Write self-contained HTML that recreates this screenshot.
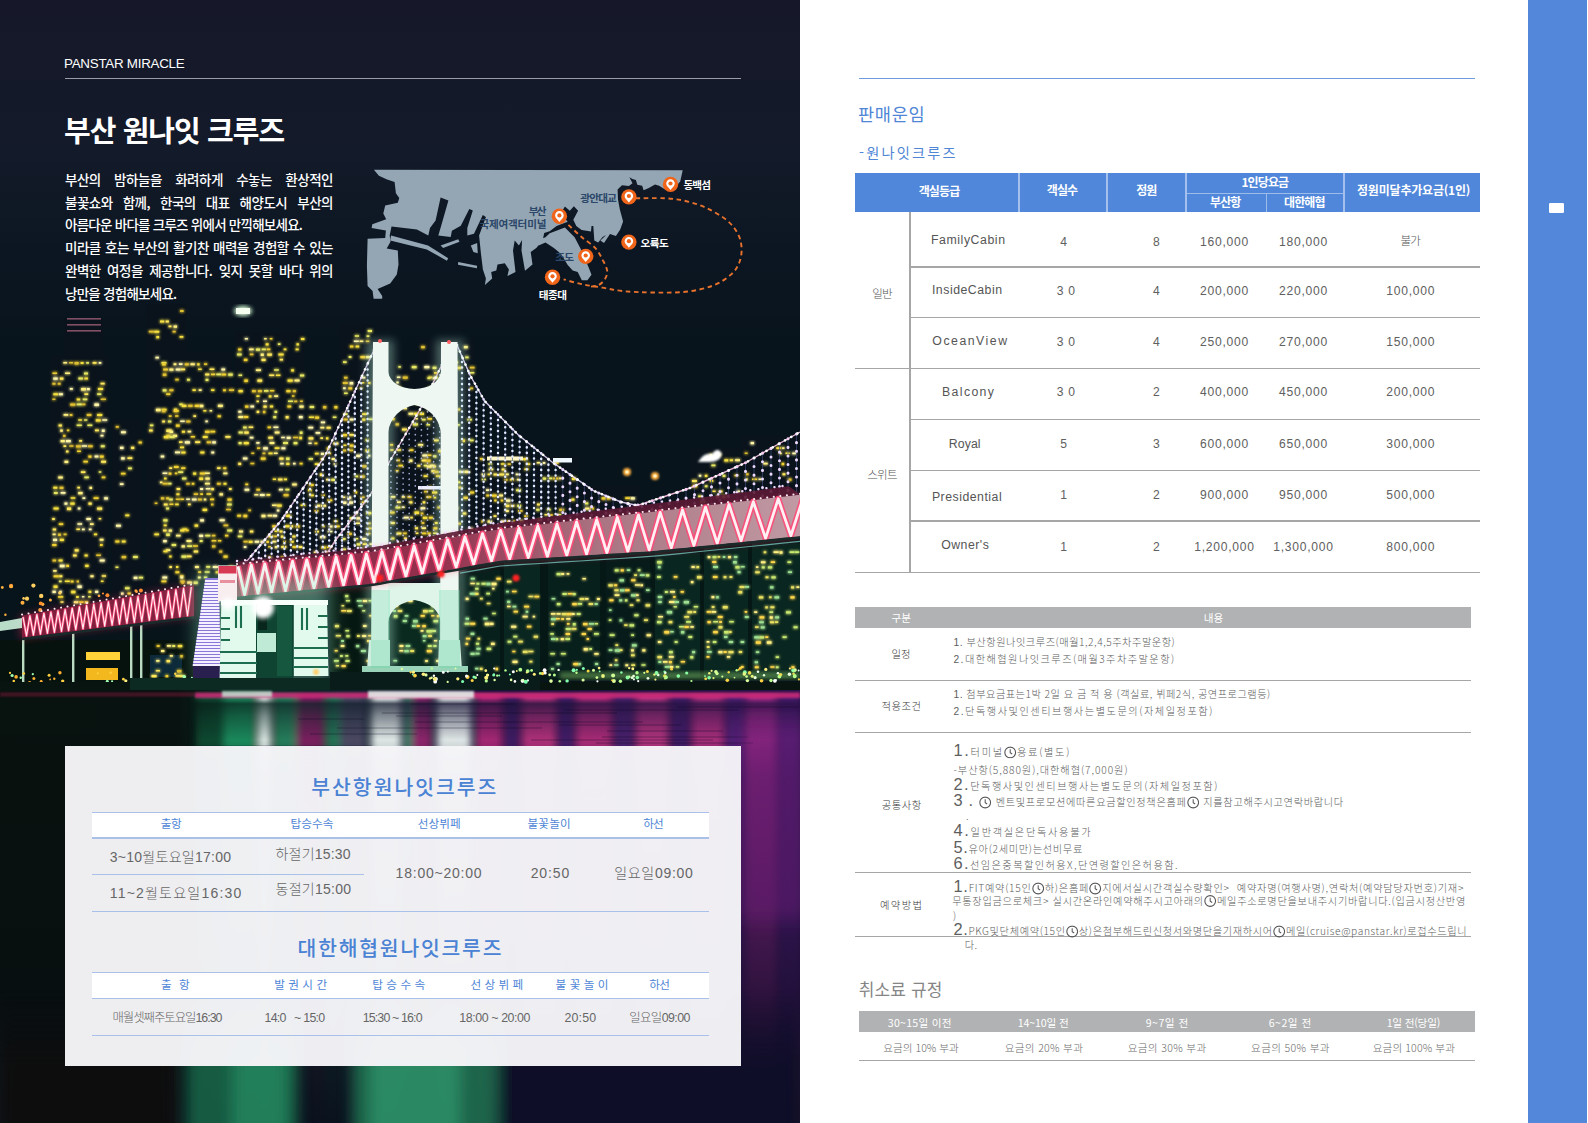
<!DOCTYPE html>
<html lang="ko">
<head>
<meta charset="utf-8">
<title>PANSTAR MIRACLE - 부산 원나잇 크루즈</title>
<style>
*{box-sizing:border-box;margin:0;padding:0}
html,body{width:1588px;height:1123px;overflow:hidden;background:#fff}
body{position:relative;font-family:"Liberation Sans","Noto Sans CJK KR",sans-serif;color:#555;-webkit-font-smoothing:antialiased}
.kr{font-family:"Noto Sans CJK KR","Liberation Sans",sans-serif}
.abs{position:absolute}
.t{position:absolute;white-space:nowrap;line-height:1}
.c{text-align:center}
#left{position:absolute;left:0;top:0;width:800px;height:1123px;overflow:hidden;background:#0b111c}
#left svg.photo{position:absolute;left:0;top:0}
#right{position:absolute;left:800px;top:0;width:788px;height:1123px;background:#fff}
#side{position:absolute;left:1528px;top:0;width:59px;height:1123px;background:#5387da}
.hl{position:absolute;height:1px}
.vl{position:absolute;width:1px}
</style>
</head>
<body>
<div id="left">
<!--PHOTO-->
<svg class="photo" width="800" height="1123" viewBox="0 0 800 1123">
<defs>
<linearGradient id="sky" x1="0" y1="0" x2="0" y2="1">
<stop offset="0" stop-color="#16182a"/><stop offset="0.22" stop-color="#131a29"/><stop offset="0.36" stop-color="#0c1622"/><stop offset="0.5" stop-color="#08141c"/><stop offset="1" stop-color="#07141a"/>
</linearGradient>
<linearGradient id="bandg" gradientUnits="userSpaceOnUse" x1="0" y1="0" x2="800" y2="0"><stop offset="0" stop-color="#7a1c3a"/><stop offset="0.55" stop-color="#94304e"/><stop offset="0.75" stop-color="#aa7482"/><stop offset="1" stop-color="#c09aa4"/></linearGradient>
<filter id="b1" x="-20%" y="-20%" width="140%" height="140%"><feGaussianBlur stdDeviation="1"/></filter>
<filter id="b2" x="-20%" y="-20%" width="140%" height="140%"><feGaussianBlur stdDeviation="2.2"/></filter>
<filter id="b4" x="-30%" y="-30%" width="160%" height="160%"><feGaussianBlur stdDeviation="4.5"/></filter>
<filter id="b8" x="-30%" y="-30%" width="160%" height="160%"><feGaussianBlur stdDeviation="9"/></filter>
<filter id="gl" x="-5%" y="-5%" width="110%" height="110%"><feGaussianBlur stdDeviation="1.6" result="b"/><feMerge><feMergeNode in="b"/><feMergeNode in="b"/><feMergeNode in="SourceGraphic"/></feMerge></filter>
<filter id="bw" x="-10%" y="-10%" width="120%" height="120%"><feGaussianBlur stdDeviation="3.6 1.5"/></filter>
<filter id="bw2" x="-10%" y="-10%" width="120%" height="120%"><feGaussianBlur stdDeviation="7 3"/></filter>
</defs>
<rect width="800" height="700" fill="url(#sky)"/>
<rect x="50" y="356" width="58" height="275.1775280898877" fill="#0a131c"/>
<rect x="64" y="318" width="39" height="313.8067415730337" fill="#0a131c"/>
<rect x="112" y="420" width="30" height="206.89887640449444" fill="#0a131c"/>
<rect x="146" y="304" width="40" height="317.361797752809" fill="#0a131c"/>
<rect x="160" y="352" width="72" height="251.51351351351354" fill="#0a131c"/>
<rect x="235" y="332" width="69" height="262.54814814814813" fill="#0a131c"/>
<rect x="306" y="400" width="32" height="191.27407407407406" fill="#0a131c"/>
<rect x="340" y="324" width="33" height="263.8203125" fill="#0a131c"/>
<rect x="388" y="360" width="53" height="215.6015625" fill="#0a131c"/>
<rect x="418" y="340" width="56" height="239.734375" fill="#0a131c"/>
<rect x="478" y="452" width="52" height="116.953125" fill="#0a131c"/>
<rect x="534" y="456" width="44" height="106.86092715231791" fill="#0a131c"/>
<rect x="582" y="486" width="58" height="73.84105960264901" fill="#0a131c"/>
<rect x="690" y="448" width="50" height="103.54765100671136" fill="#0a131c"/>
<rect x="742" y="436" width="58" height="110.27785234899329" fill="#0a131c"/>
<g filter="url(#gl)">
<path d="M63.3 362.0h3.8v1.5h-3.8zM65.0 372.4h5.1v1.6h-5.1zM81.1 388.0h4.8v2.4h-4.8zM63.6 414.0h4.6v1.7h-4.6zM60.2 429.6h2.6v2.1h-2.6zM60.6 440.0h4.2v2.3h-4.2zM64.5 460.8h3.7v2.2h-3.7zM58.2 476.4h4.6v2.2h-4.6zM89.5 486.8h2.5v2.3h-2.5zM78.2 492.0h4.4v2.3h-4.4zM90.0 523.2h3.6v1.9h-3.6zM52.6 533.6h3.1v1.7h-3.1zM99.7 538.8h3.8v1.9h-3.8zM53.2 570.0h3.4v1.7h-3.4zM90.4 575.2h3.2v2.1h-3.2zM73.8 601.2h4.5v2.1h-4.5z" fill="#fff080"/>
<path d="M69.1 362.0h3.9v1.6h-3.9zM74.5 362.0h4.2v2.4h-4.2zM52.4 382.8h3.1v1.9h-3.1zM57.8 382.8h2.8v2.0h-2.8zM52.4 398.4h3.0v1.7h-3.0zM100.7 398.4h5.2v1.5h-5.2zM70.2 403.6h5.1v2.1h-5.1zM82.2 403.6h3.2v1.7h-3.2zM69.8 414.0h2.6v2.1h-2.6zM86.8 414.0h4.6v2.0h-4.6zM63.1 434.8h2.4v2.2h-2.4zM69.3 445.2h4.2v1.6h-4.2zM76.0 445.2h4.9v2.2h-4.9zM88.0 445.2h4.7v2.1h-4.7zM59.6 486.8h3.8v2.2h-3.8zM58.1 533.6h2.8v2.3h-2.8zM63.5 533.6h3.1v1.7h-3.1zM96.2 554.4h4.7v1.6h-4.7zM52.6 559.6h3.5v1.8h-3.5zM76.6 580.4h2.4v2.1h-2.4z" fill="#e0c030"/>
<path d="M80.6 362.0h3.0v2.0h-3.0zM84.4 377.6h3.5v1.8h-3.5zM98.0 388.0h5.1v2.0h-5.1zM53.3 393.2h4.8v2.0h-4.8zM76.7 398.4h3.5v2.1h-3.5zM97.1 414.0h5.1v2.0h-5.1zM78.3 419.2h3.6v1.6h-3.6zM95.8 419.2h4.9v2.4h-4.9zM53.3 486.8h4.0v1.9h-4.0zM70.7 497.2h4.6v1.5h-4.6zM70.3 502.4h4.3v2.3h-4.3zM53.5 507.6h5.1v1.9h-5.1zM93.9 533.6h3.2v1.6h-3.2zM59.8 538.8h4.1v2.1h-4.1zM84.6 554.4h3.1v2.2h-3.1zM58.5 559.6h4.1v1.9h-4.1zM85.2 564.8h3.4v2.2h-3.4zM64.8 580.4h5.0v1.7h-5.0zM100.9 580.4h2.6v1.5h-2.6zM53.6 585.6h3.9v2.3h-3.9zM71.2 590.8h4.2v2.4h-4.2zM88.5 590.8h2.8v2.3h-2.8zM76.1 596.0h2.7v2.1h-2.7z" fill="#f6e040"/>
<path d="M86.2 362.0h2.7v1.8h-2.7zM84.0 372.4h4.0v2.2h-4.0zM78.4 377.6h4.5v1.9h-4.5zM97.2 393.2h4.1v1.8h-4.1zM82.7 398.4h4.6v1.8h-4.6zM76.7 403.6h5.2v1.7h-5.2zM84.1 419.2h3.2v1.6h-3.2zM76.7 424.4h5.1v1.6h-5.1zM87.4 424.4h4.9v1.7h-4.9zM100.8 445.2h3.9v2.0h-3.9zM98.8 471.2h2.5v1.6h-2.5zM84.3 476.4h4.5v1.9h-4.5zM53.9 492.0h3.8v2.1h-3.8zM58.9 580.4h2.8v1.8h-2.8zM88.1 596.0h2.6v1.5h-2.6z" fill="#e8e860"/>
<path d="M92.6 362.0h4.0v1.7h-4.0zM59.9 377.6h3.5v2.1h-3.5zM100.5 382.8h4.2v1.6h-4.2zM84.4 393.2h3.8v1.8h-3.8zM58.6 424.4h3.3v2.1h-3.3zM95.0 429.6h3.9v1.7h-3.9zM79.2 440.0h2.9v1.7h-2.9zM63.5 445.2h2.7v1.9h-2.7zM66.0 450.4h2.5v2.1h-2.5zM101.1 460.8h4.9v1.9h-4.9zM80.9 471.2h4.5v1.7h-4.5zM77.3 486.8h2.7v1.8h-2.7zM88.5 502.4h3.2v2.3h-3.2zM67.0 507.6h4.1v2.3h-4.1zM97.1 507.6h5.0v2.2h-5.0zM52.2 518.0h2.6v1.9h-2.6zM98.7 518.0h2.5v1.6h-2.5zM52.7 528.4h3.4v2.2h-3.4zM76.4 528.4h3.6v1.6h-3.6zM74.7 549.2h3.9v2.3h-3.9zM73.0 554.4h3.7v2.0h-3.7zM59.3 575.2h3.0v2.1h-3.0zM101.8 575.2h4.2v1.5h-4.2zM60.5 601.2h3.0v1.6h-3.0zM84.8 601.2h3.4v2.3h-3.4z" fill="#ffe85a"/>
<path d="M98.7 362.0h2.6v1.7h-2.6zM53.3 377.6h4.4v2.1h-4.4zM69.8 388.0h3.0v1.8h-3.0zM87.0 388.0h2.8v2.2h-2.8zM59.0 393.2h3.9v2.0h-3.9zM94.4 403.6h4.5v2.3h-4.5zM102.3 419.2h4.9v1.6h-4.9zM101.8 429.6h2.9v2.3h-2.9zM100.5 434.8h3.0v1.7h-3.0zM66.0 440.0h4.8v2.3h-4.8zM81.8 445.2h5.2v1.6h-5.2zM94.6 455.6h3.8v1.9h-3.8zM60.6 492.0h4.9v1.8h-4.9zM82.5 497.2h2.8v1.7h-2.8zM104.2 497.2h3.7v2.4h-3.7zM64.5 502.4h2.9v2.3h-2.9zM77.8 507.6h2.6v1.9h-2.6zM86.4 518.0h4.5v1.9h-4.5zM77.4 523.2h4.7v1.6h-4.7zM82.0 528.4h2.7v1.9h-2.7zM88.8 528.4h2.8v1.9h-2.8zM53.0 538.8h4.1v2.2h-4.1zM99.7 559.6h5.0v1.8h-5.0zM59.8 564.8h4.8v2.4h-4.8zM77.5 585.6h4.2v2.4h-4.2zM52.5 590.8h3.3v2.2h-3.3zM59.3 590.8h2.5v2.1h-2.5zM95.1 590.8h3.1v2.3h-3.1zM81.9 596.0h2.5v1.5h-2.5z" fill="#fff6a8"/>
<path d="M52.5 372.4h4.6v1.6h-4.6zM66.9 429.6h2.4v1.6h-2.4zM77.0 450.4h3.9v1.7h-3.9zM88.4 455.6h3.1v2.2h-3.1zM99.9 455.6h3.8v2.1h-3.8zM83.4 460.8h4.5v1.7h-4.5zM101.7 476.4h3.6v1.8h-3.6zM93.6 497.2h5.0v1.7h-5.0zM58.8 523.2h4.4v1.8h-4.4zM52.2 544.0h4.3v1.9h-4.3zM100.0 544.0h2.7v2.0h-2.7zM66.2 564.8h2.8v2.3h-2.8zM53.6 575.2h5.2v2.0h-5.2zM70.8 580.4h2.8v2.1h-2.8zM58.1 596.0h5.1v1.7h-5.1zM79.1 601.2h4.5v1.7h-4.5z" fill="#f0d030"/>
</g>
<g filter="url(#gl)">
<path d="M115.8 426.0h3.0v1.7h-3.0zM121.7 556.0h4.4v2.3h-4.4z" fill="#e0c030"/>
<path d="M121.0 431.2h4.8v2.1h-4.8zM120.0 446.8h3.5v2.2h-3.5zM121.1 457.2h3.6v2.2h-3.6zM119.9 483.2h3.6v1.9h-3.6zM116.0 524.8h4.9v2.0h-4.9zM133.7 576.8h3.7v2.3h-3.7zM121.0 592.4h2.6v2.3h-2.6z" fill="#fff6a8"/>
<path d="M138.6 441.6h3.2v1.8h-3.2zM120.9 472.8h4.6v1.8h-4.6zM115.3 540.4h4.1v2.1h-4.1z" fill="#f0d030"/>
<path d="M131.1 446.8h3.1v2.2h-3.1zM127.5 457.2h4.8v1.9h-4.8z" fill="#ffe85a"/>
<path d="M128.0 467.6h3.9v1.6h-3.9zM133.1 556.0h4.7v1.9h-4.7zM115.5 566.4h2.9v1.5h-2.9zM138.8 576.8h4.3v1.6h-4.3zM125.0 587.2h4.6v2.1h-4.6z" fill="#e8e860"/>
<path d="M125.3 514.4h4.0v1.8h-4.0zM121.8 540.4h3.8v2.2h-3.8zM127.5 592.4h3.3v2.2h-3.3z" fill="#f6e040"/>
</g>
<g filter="url(#gl)">
<path d="M180.1 310.0h3.5v2.0h-3.5zM148.8 330.8h5.1v1.7h-5.1zM172.6 330.8h3.1v1.8h-3.1zM166.3 434.8h4.1v2.4h-4.1zM160.9 497.2h3.3v2.3h-3.3zM166.1 497.2h2.9v2.2h-2.9zM154.7 502.4h2.7v1.7h-2.7zM180.3 580.4h4.4v1.9h-4.4z" fill="#e0c030"/>
<path d="M160.0 320.4h4.2v2.2h-4.2zM154.3 330.8h5.0v2.0h-5.0zM156.3 336.0h2.8v2.2h-2.8zM179.6 336.0h3.7v1.7h-3.7zM161.8 408.8h4.7v1.6h-4.7zM182.4 528.4h4.7v1.8h-4.7zM154.3 533.6h4.7v1.7h-4.7z" fill="#f6e040"/>
<path d="M165.7 320.4h3.2v2.0h-3.2zM168.5 325.6h3.0v1.7h-3.0zM174.0 408.8h3.1v2.2h-3.1zM149.1 429.6h3.6v2.0h-3.6zM166.3 429.6h5.1v2.4h-5.1z" fill="#ffe85a"/>
<path d="M173.6 325.6h3.4v2.1h-3.4zM155.9 408.8h4.8v2.4h-4.8zM173.0 434.8h4.1v2.3h-4.1zM159.9 481.6h2.6v1.7h-2.6zM165.9 549.2h4.4v1.8h-4.4z" fill="#fff080"/>
<path d="M155.5 356.8h3.4v1.8h-3.4zM160.7 455.6h3.5v1.9h-3.5z" fill="#fff6a8"/>
<path d="M161.4 362.0h5.1v1.6h-5.1zM179.3 403.6h3.4v1.7h-3.4zM149.9 424.4h3.4v1.9h-3.4zM178.2 471.2h5.0v1.8h-5.0zM166.1 507.6h3.0v1.9h-3.0zM166.2 533.6h3.6v2.3h-3.6zM171.7 544.0h4.4v2.1h-4.4z" fill="#e8e860"/>
<path d="M166.2 393.2h4.1v1.9h-4.1zM175.9 424.4h3.8v2.4h-3.8zM173.9 466.0h4.8v2.1h-4.8zM180.1 575.2h3.3v2.2h-3.3zM161.4 580.4h5.0v1.9h-5.0z" fill="#f0d030"/>
</g>
<g filter="url(#gl)">
<path d="M162.1 363.2h3.6v2.2h-3.6zM163.2 368.4h4.7v2.2h-4.7zM211.0 373.6h4.1v1.7h-4.1zM221.7 373.6h4.4v1.8h-4.4zM223.1 389.2h2.8v2.1h-2.8zM194.7 404.8h4.8v2.1h-4.8zM173.7 410.0h5.0v2.0h-5.0zM175.1 415.2h3.3v1.5h-3.3zM217.6 415.2h3.3v2.1h-3.3zM205.1 430.8h4.5v2.2h-4.5zM210.4 430.8h4.8v1.7h-4.8zM190.7 436.0h4.3v1.6h-4.3zM181.1 467.2h4.3v1.7h-4.3zM223.2 467.2h3.1v2.0h-3.1zM168.6 472.4h2.8v2.4h-2.8zM174.8 472.4h2.5v1.9h-2.5zM199.8 472.4h5.1v2.1h-5.1zM191.8 482.8h2.5v2.0h-2.5zM200.2 493.2h2.8v1.7h-2.8zM181.0 498.4h2.9v1.6h-2.9zM210.1 498.4h4.0v1.8h-4.0zM227.5 498.4h4.2v2.3h-4.2zM169.4 503.6h4.0v1.5h-4.0zM185.9 529.6h2.8v1.7h-2.8zM225.0 534.8h3.3v1.6h-3.3zM211.6 540.0h4.7v1.6h-4.7zM218.0 540.0h3.3v1.5h-3.3zM193.0 545.2h4.9v1.5h-4.9zM223.5 555.6h4.1v2.2h-4.1zM175.4 571.2h3.9v2.1h-3.9zM198.2 571.2h2.9v1.9h-2.9zM215.6 571.2h4.0v2.1h-4.0z" fill="#f0d030"/>
<path d="M173.6 363.2h2.8v2.1h-2.8zM190.5 363.2h4.3v2.0h-4.3zM169.4 368.4h4.0v2.4h-4.0zM198.7 389.2h2.9v1.8h-2.9zM200.0 404.8h3.3v2.4h-3.3zM217.9 404.8h4.9v2.1h-4.9zM209.6 410.0h2.5v1.5h-2.5zM169.6 430.8h3.5v2.3h-3.5zM187.6 430.8h3.6v1.8h-3.6zM205.0 472.4h4.8v1.6h-4.8zM223.3 472.4h4.1v1.9h-4.1zM205.4 477.6h4.3v2.1h-4.3zM204.9 482.8h5.0v1.8h-5.0zM219.5 493.2h3.4v2.2h-3.4zM203.8 498.4h2.5v2.0h-2.5zM168.7 529.6h3.2v2.1h-3.2zM176.1 534.8h4.5v1.7h-4.5zM186.5 540.0h5.1v2.1h-5.1zM181.6 545.2h3.3v2.2h-3.3zM195.0 566.0h3.9v1.9h-3.9zM197.9 576.4h2.8v2.2h-2.8zM187.2 581.6h4.7v2.2h-4.7z" fill="#fff080"/>
<path d="M178.9 363.2h3.6v1.7h-3.6zM175.7 368.4h4.8v2.0h-4.8zM221.4 368.4h3.7v2.0h-3.7zM180.2 420.4h4.5v1.7h-4.5zM205.4 420.4h2.4v1.9h-2.4zM184.8 441.2h5.1v2.3h-5.1zM212.3 441.2h3.5v2.4h-3.5zM175.0 451.6h5.1v1.7h-5.1zM211.3 451.6h2.9v1.8h-2.9zM162.6 472.4h4.7v1.6h-4.7zM200.1 488.0h3.0v2.1h-3.0zM205.7 488.0h4.7v1.6h-4.7zM186.2 498.4h3.7v1.7h-3.7zM191.9 498.4h4.7v2.2h-4.7zM200.2 519.2h3.7v2.2h-3.7zM219.6 519.2h5.1v2.0h-5.1zM199.2 534.8h3.9v2.1h-3.9zM163.2 540.0h3.5v2.2h-3.5zM212.8 566.0h5.1v2.0h-5.1zM162.4 576.4h4.8v2.1h-4.8zM180.4 576.4h2.7v2.2h-2.7z" fill="#fff6a8"/>
<path d="M184.7 363.2h4.1v2.3h-4.1zM204.0 363.2h3.2v1.9h-3.2zM162.8 373.6h3.6v2.3h-3.6zM175.3 378.8h3.4v1.8h-3.4zM169.3 389.2h4.1v2.1h-4.1zM228.9 389.2h5.2v1.8h-5.2zM188.1 404.8h4.5v2.2h-4.5zM162.1 410.0h3.3v2.2h-3.3zM168.8 415.2h2.8v1.7h-2.8zM186.2 420.4h4.2v2.1h-4.2zM206.7 441.2h4.3v2.1h-4.3zM162.6 482.8h5.2v1.7h-5.2zM186.2 482.8h3.5v1.9h-3.5zM216.9 482.8h3.9v1.9h-3.9zM193.8 493.2h4.2v1.7h-4.2zM175.7 498.4h5.0v1.5h-5.0zM198.0 498.4h3.9v2.2h-3.9zM211.0 503.6h2.5v1.9h-2.5zM226.1 508.8h4.9v1.5h-4.9zM223.5 524.4h4.7v1.9h-4.7zM211.9 534.8h3.5v1.8h-3.5zM212.0 545.2h3.4v2.3h-3.4zM219.3 550.4h2.9v2.3h-2.9zM228.9 566.0h4.2v2.2h-4.2zM181.4 581.6h2.7v2.2h-2.7z" fill="#e0c030"/>
<path d="M197.2 363.2h2.4v2.4h-2.4zM198.1 368.4h3.6v1.7h-3.6zM192.5 389.2h3.3v1.7h-3.3zM211.1 389.2h3.3v1.9h-3.3zM181.8 404.8h4.6v2.3h-4.6zM203.3 410.0h3.1v1.5h-3.1zM181.9 430.8h3.1v1.9h-3.1zM163.8 436.0h4.6v2.3h-4.6zM202.8 436.0h4.9v2.0h-4.9zM180.0 446.4h4.1v1.8h-4.1zM181.3 451.6h4.2v2.0h-4.2zM200.3 451.6h4.1v2.0h-4.1zM193.1 472.4h3.1v2.3h-3.1zM164.0 477.6h2.6v1.9h-2.6zM199.3 477.6h3.8v2.3h-3.8zM223.5 482.8h3.0v1.9h-3.0zM176.4 493.2h3.1v2.0h-3.1zM206.5 493.2h4.7v1.6h-4.7zM175.2 503.6h3.5v1.7h-3.5zM202.6 508.8h4.5v2.1h-4.5zM163.7 524.4h3.0v1.9h-3.0zM194.6 524.4h3.5v2.4h-3.5zM180.1 529.6h4.2v1.8h-4.2zM163.4 550.4h4.1v1.8h-4.1zM169.2 555.6h2.4v2.0h-2.4zM176.0 566.0h2.4v2.1h-2.4z" fill="#f6e040"/>
<path d="M180.8 368.4h4.3v1.9h-4.3zM209.6 368.4h4.8v1.7h-4.8zM205.2 373.6h4.1v1.9h-4.1zM193.4 415.2h2.6v1.9h-2.6zM162.2 420.4h2.8v2.2h-2.8zM225.3 436.0h5.2v1.8h-5.2zM179.1 441.2h3.4v1.9h-3.4zM195.1 441.2h5.1v1.7h-5.1zM169.3 467.2h2.8v1.7h-2.8zM217.1 467.2h3.4v1.8h-3.4zM176.6 488.0h3.6v2.1h-3.6zM211.2 488.0h2.7v2.2h-2.7zM229.0 488.0h2.6v2.1h-2.6zM163.8 503.6h3.8v2.0h-3.8zM188.0 503.6h2.7v1.6h-2.7zM163.1 529.6h3.5v1.9h-3.5zM193.7 550.4h4.4v2.2h-4.4zM186.8 555.6h4.8v1.7h-4.8zM169.4 566.0h2.5v2.0h-2.5z" fill="#ffe85a"/>
<path d="M216.3 373.6h4.9v1.6h-4.9zM228.2 373.6h4.5v2.1h-4.5zM187.0 378.8h2.9v1.9h-2.9zM205.6 378.8h2.8v2.3h-2.8zM162.7 389.2h3.8v2.3h-3.8zM167.9 420.4h3.4v2.1h-3.4zM169.6 436.0h5.0v2.1h-5.0zM182.1 477.6h4.3v2.0h-4.3zM168.2 482.8h3.3v1.7h-3.3zM169.1 498.4h3.7v2.2h-3.7zM227.1 503.6h4.6v2.0h-4.6zM163.3 519.2h4.2v2.3h-4.2zM227.2 529.6h5.0v1.9h-5.0zM205.2 534.8h5.1v1.6h-5.1zM199.7 540.0h2.9v2.0h-2.9zM187.2 545.2h4.9v1.9h-4.9zM181.5 555.6h4.8v2.2h-4.8zM206.2 566.0h4.0v1.7h-4.0zM204.7 571.2h4.9v1.5h-4.9zM203.9 576.4h3.3v1.8h-3.3zM193.7 581.6h4.0v2.3h-4.0z" fill="#e8e860"/>
</g>
<g filter="url(#gl)">
<path d="M244.8 338.0h3.1v1.5h-3.1zM263.0 400.4h4.0v1.7h-4.0zM250.4 405.6h3.7v1.8h-3.7zM238.3 410.8h3.3v1.9h-3.3zM298.9 416.0h3.8v2.2h-3.8zM273.4 426.4h5.0v1.5h-5.0zM249.7 436.8h3.7v1.8h-3.7zM281.2 436.8h3.6v1.5h-3.6zM286.7 436.8h3.9v2.3h-3.9zM256.3 442.0h3.2v1.8h-3.2zM263.2 447.2h4.6v2.2h-4.6zM281.4 447.2h4.0v2.1h-4.0zM242.9 457.6h4.5v1.8h-4.5zM280.2 462.8h3.5v1.8h-3.5zM293.0 462.8h2.6v1.7h-2.6zM244.6 488.8h4.6v1.9h-4.6zM278.9 488.8h4.0v1.8h-4.0zM259.9 494.0h4.8v1.9h-4.8zM276.8 509.6h2.6v1.8h-2.6zM272.9 514.8h4.2v2.0h-4.2zM254.7 540.8h4.3v1.9h-4.3zM260.6 540.8h3.7v2.1h-3.7zM243.8 546.0h2.6v1.9h-2.6zM292.1 556.4h3.2v1.6h-3.2z" fill="#fff6a8"/>
<path d="M264.1 338.0h2.6v1.6h-2.6zM249.1 348.4h4.6v1.8h-4.6zM260.7 353.6h3.1v2.3h-3.1zM255.9 369.2h5.1v1.8h-5.1zM294.5 379.6h5.1v2.0h-5.1zM274.2 395.2h3.9v1.8h-3.9zM299.4 405.6h4.2v2.1h-4.2zM238.4 416.0h4.7v2.0h-4.7zM274.7 431.6h4.8v2.0h-4.8zM269.6 442.0h4.8v2.0h-4.8zM273.9 452.4h3.8v1.7h-3.8zM292.2 483.6h4.6v2.0h-4.6zM254.3 494.0h4.0v1.6h-4.0zM272.0 504.4h4.7v1.5h-4.7zM261.5 514.8h4.0v2.4h-4.0zM267.6 514.8h4.6v1.8h-4.6zM239.0 530.4h4.1v2.1h-4.1zM272.1 540.8h4.3v1.7h-4.3zM274.8 546.0h2.9v2.2h-2.9z" fill="#fff080"/>
<path d="M269.8 338.0h2.6v1.5h-2.6zM238.1 348.4h3.4v2.2h-3.4zM266.8 348.4h3.5v1.8h-3.5zM243.9 358.8h3.5v2.3h-3.5zM244.3 379.6h3.5v2.3h-3.5zM270.0 390.0h4.3v1.6h-4.3zM286.4 390.0h4.1v2.2h-4.1zM291.9 395.2h2.6v1.5h-2.6zM245.1 405.6h3.3v2.1h-3.3zM287.4 405.6h3.8v2.0h-3.8zM243.8 416.0h4.5v1.9h-4.5zM267.6 426.4h3.4v1.8h-3.4zM260.8 457.6h4.8v2.2h-4.8zM299.6 462.8h3.0v1.6h-3.0zM245.3 483.6h2.9v1.6h-2.9zM237.3 514.8h3.7v1.9h-3.7zM243.4 514.8h3.8v2.4h-3.8zM272.3 525.2h3.6v2.4h-3.6zM295.6 525.2h4.0v2.2h-4.0zM274.3 535.6h2.6v1.6h-2.6zM266.4 540.8h2.6v2.1h-2.6zM283.2 540.8h2.6v1.7h-2.6zM292.4 546.0h4.9v2.1h-4.9z" fill="#f0d030"/>
<path d="M300.9 338.0h3.5v2.1h-3.5zM265.7 343.2h2.9v2.3h-2.9zM296.5 343.2h2.4v2.3h-2.4zM283.7 348.4h2.7v1.9h-2.7zM295.6 348.4h3.1v1.9h-3.1zM278.4 353.6h5.2v1.9h-5.2zM291.2 369.2h2.7v2.4h-2.7zM275.9 374.4h4.5v1.7h-4.5zM287.6 379.6h5.1v2.2h-5.1zM238.5 390.0h4.3v2.2h-4.3zM256.4 395.2h3.1v1.7h-3.1zM268.8 395.2h2.7v2.3h-2.7zM269.9 405.6h3.2v1.8h-3.2zM299.2 436.8h2.8v2.4h-2.8zM243.8 442.0h5.0v2.2h-5.0zM274.7 447.2h4.7v1.7h-4.7zM268.4 452.4h4.2v1.9h-4.2zM286.2 462.8h3.3v2.2h-3.3zM272.8 478.4h3.2v1.6h-3.2zM284.0 478.4h3.0v1.8h-3.0zM277.1 504.4h4.6v2.3h-4.6zM300.6 504.4h4.7v1.6h-4.7zM286.1 514.8h5.1v2.1h-5.1zM285.0 525.2h4.4v2.0h-4.4zM274.5 530.4h4.9v1.7h-4.9zM248.7 540.8h3.9v2.2h-3.9zM290.0 540.8h3.8v1.9h-3.8zM268.8 556.4h3.0v2.2h-3.0z" fill="#f6e040"/>
<path d="M277.9 343.2h2.5v1.9h-2.5zM255.9 348.4h4.2v2.3h-4.2zM261.7 348.4h4.2v1.9h-4.2zM237.1 353.6h4.5v2.0h-4.5zM274.1 369.2h4.7v1.6h-4.7zM238.5 374.4h3.6v1.6h-3.6zM300.0 374.4h4.2v2.0h-4.2zM264.0 390.0h4.5v1.8h-4.5zM288.0 400.4h5.0v1.7h-5.0zM274.5 410.8h2.6v2.2h-2.6zM273.3 416.0h2.9v2.2h-2.9zM243.1 426.4h3.6v2.2h-3.6zM238.6 431.6h4.2v1.8h-4.2zM299.8 431.6h2.7v2.3h-2.7zM238.6 442.0h3.0v2.2h-3.0zM283.1 442.0h4.9v2.0h-4.9zM293.6 442.0h3.8v2.3h-3.8zM286.1 457.6h3.4v2.3h-3.4zM285.3 488.8h4.1v1.6h-4.1zM237.8 535.6h4.5v1.7h-4.5z" fill="#e8e860"/>
<path d="M249.8 353.6h3.6v1.6h-3.6zM252.0 390.0h3.8v2.3h-3.8zM257.9 390.0h4.0v2.3h-4.0zM292.8 390.0h3.1v2.2h-3.1zM294.2 400.4h3.1v1.9h-3.1zM299.9 400.4h3.0v1.5h-3.0zM262.9 410.8h2.5v2.4h-2.5zM293.0 436.8h5.0v1.5h-5.0zM257.0 447.2h3.2v1.9h-3.2zM251.3 452.4h2.9v1.7h-2.9zM262.5 452.4h2.9v1.9h-2.9zM250.4 462.8h3.9v1.5h-3.9zM256.4 488.8h3.7v2.0h-3.7zM283.6 494.0h5.0v2.3h-5.0zM248.3 509.6h2.6v1.6h-2.6zM243.5 540.8h4.2v1.6h-4.2zM268.0 546.0h3.3v1.5h-3.3zM280.7 556.4h3.2v2.0h-3.2z" fill="#e0c030"/>
<path d="M267.2 353.6h4.7v2.1h-4.7zM261.5 358.8h4.1v2.3h-4.1zM279.7 358.8h3.3v1.7h-3.3zM269.2 374.4h5.0v1.6h-5.0zM257.4 379.6h4.7v2.1h-4.7zM256.5 400.4h2.4v1.8h-2.4zM263.4 405.6h3.3v2.1h-3.3zM256.7 410.8h2.5v2.2h-2.5zM285.7 416.0h2.9v2.4h-2.9zM248.6 426.4h4.6v1.7h-4.6zM244.3 431.6h4.4v2.1h-4.4zM268.3 436.8h4.8v2.0h-4.8zM279.3 457.6h4.2v2.2h-4.2zM238.3 462.8h2.8v2.3h-2.8zM278.1 478.4h4.4v2.1h-4.4zM266.5 494.0h3.7v1.8h-3.7zM290.2 525.2h2.9v2.2h-2.9zM249.9 530.4h3.4v2.1h-3.4zM279.9 530.4h2.7v2.2h-2.7zM268.1 535.6h5.2v1.7h-5.2zM280.8 535.6h2.6v2.2h-2.6zM292.3 535.6h3.3v1.8h-3.3zM281.2 546.0h5.1v1.9h-5.1zM298.8 546.0h3.5v2.1h-3.5z" fill="#ffe85a"/>
</g>
<g filter="url(#gl)">
<path d="M309.7 406.0h4.4v1.9h-4.4zM332.8 416.4h3.6v1.5h-3.6zM308.7 458.0h4.3v1.8h-4.3zM331.3 478.8h3.8v2.1h-3.8z" fill="#e8e860"/>
<path d="M323.1 406.0h3.2v2.4h-3.2zM321.6 494.4h3.3v1.7h-3.3zM314.6 510.0h3.8v1.8h-3.8z" fill="#e0c030"/>
<path d="M334.4 406.0h3.0v2.4h-3.0zM315.1 416.4h4.0v2.3h-4.0zM314.4 442.4h3.0v1.8h-3.0zM327.6 452.8h3.5v1.5h-3.5zM320.6 458.0h2.7v2.1h-2.7zM309.0 484.0h4.7v1.9h-4.7zM327.5 499.6h4.8v1.7h-4.8zM333.8 520.4h4.0v1.7h-4.0zM334.6 525.6h5.1v1.7h-5.1zM326.9 546.4h4.3v1.7h-4.3z" fill="#f0d030"/>
<path d="M308.9 416.4h5.1v1.7h-5.1zM326.0 437.2h2.4v2.3h-2.4zM326.9 447.6h3.0v2.4h-3.0zM314.9 452.8h3.8v1.6h-3.8zM314.8 463.2h5.0v1.8h-5.0zM308.1 489.2h3.6v2.0h-3.6zM309.3 494.4h4.6v1.9h-4.6zM321.4 546.4h4.3v2.3h-4.3z" fill="#f6e040"/>
<path d="M320.8 421.6h4.3v1.6h-4.3zM308.3 426.8h4.9v1.8h-4.9zM315.6 432.0h4.6v1.8h-4.6zM308.4 442.4h3.3v1.6h-3.3zM320.9 452.8h3.2v2.1h-3.2zM328.8 525.6h3.7v1.9h-3.7zM327.7 530.8h4.8v1.5h-4.8zM320.1 536.0h5.2v2.2h-5.2z" fill="#fff6a8"/>
<path d="M320.3 426.8h4.0v1.7h-4.0zM333.3 442.4h5.1v2.0h-5.1zM331.6 458.0h3.5v2.0h-3.5zM333.6 463.2h2.7v1.5h-2.7zM326.1 478.8h3.5v1.6h-3.5zM315.8 504.8h4.2v2.0h-4.2zM321.0 504.8h5.1v1.9h-5.1zM313.8 551.6h3.7v1.5h-3.7zM325.5 551.6h2.8v1.5h-2.8z" fill="#fff080"/>
<path d="M326.5 426.8h4.2v1.9h-4.2zM308.6 437.2h4.7v2.2h-4.7zM320.4 437.2h2.6v1.7h-2.6zM319.9 473.6h3.2v2.3h-3.2zM322.0 525.6h2.6v1.7h-2.6zM315.2 530.8h3.7v1.7h-3.7z" fill="#ffe85a"/>
</g>
<g filter="url(#gl)">
<path d="M367.7 330.0h4.3v2.1h-4.3zM354.8 335.2h4.3v1.5h-4.3zM366.6 335.2h2.7v1.8h-2.7zM348.7 356.0h2.7v2.0h-2.7zM343.0 361.2h3.6v1.9h-3.6zM344.0 392.4h3.7v1.6h-3.7zM343.8 413.2h3.9v1.8h-3.9zM368.4 418.4h4.4v1.6h-4.4zM354.4 475.6h3.7v1.7h-3.7zM349.6 517.2h2.9v2.2h-2.9zM342.3 538.0h3.3v1.9h-3.3zM354.8 538.0h3.4v1.5h-3.4zM356.6 543.2h4.2v2.4h-4.2zM342.6 548.4h3.4v2.2h-3.4z" fill="#e8e860"/>
<path d="M353.8 340.4h5.0v1.5h-5.0zM362.0 376.8h3.3v1.6h-3.3zM349.7 382.0h3.5v2.4h-3.5zM343.1 387.2h2.6v2.1h-2.6zM349.7 418.4h3.9v2.0h-3.9zM356.2 454.8h4.8v2.2h-4.8zM367.4 454.8h2.9v2.0h-2.9zM347.5 496.4h3.7v2.3h-3.7zM343.1 501.6h3.3v2.3h-3.3zM348.6 501.6h4.4v2.2h-4.4zM355.1 512.0h2.4v2.3h-2.4zM356.3 517.2h4.1v2.4h-4.1zM361.5 538.0h5.1v2.0h-5.1z" fill="#fff6a8"/>
<path d="M359.6 340.4h3.7v1.5h-3.7zM366.2 356.0h4.2v2.2h-4.2zM342.0 496.4h3.3v1.6h-3.3zM355.9 522.4h4.3v1.5h-4.3zM369.5 543.2h2.7v1.8h-2.7z" fill="#fff080"/>
<path d="M365.8 340.4h3.5v1.7h-3.5zM344.0 376.8h3.5v1.9h-3.5zM342.8 382.0h5.0v2.0h-5.0zM343.4 418.4h4.5v2.2h-4.5zM342.7 449.6h3.4v1.9h-3.4zM348.7 449.6h4.6v1.6h-4.6zM362.2 465.2h4.4v2.2h-4.4zM359.9 475.6h4.9v2.1h-4.9zM360.3 496.4h4.4v1.7h-4.4zM367.8 522.4h3.0v1.8h-3.0zM366.8 527.6h5.0v1.7h-5.0zM347.7 532.8h4.1v2.3h-4.1zM366.0 532.8h4.4v1.7h-4.4z" fill="#e0c030"/>
<path d="M349.9 345.6h3.5v1.8h-3.5zM360.4 356.0h4.9v2.3h-4.9zM361.7 382.0h2.6v1.6h-2.6zM367.4 382.0h3.0v1.9h-3.0zM348.3 387.2h3.9v2.2h-3.9zM342.4 434.0h4.6v2.2h-4.6zM349.7 444.4h3.9v2.3h-3.9zM354.4 491.2h2.7v2.3h-2.7zM360.8 501.6h4.3v1.5h-4.3z" fill="#f0d030"/>
<path d="M355.6 345.6h3.6v1.9h-3.6zM362.1 413.2h5.2v1.9h-5.2zM362.2 418.4h3.2v2.3h-3.2zM365.6 439.2h2.9v1.9h-2.9zM343.4 444.4h3.1v1.7h-3.1zM365.5 449.6h3.7v2.2h-3.7zM366.4 512.0h4.9v2.3h-4.9z" fill="#f6e040"/>
<path d="M359.8 387.2h2.5v1.9h-2.5zM349.2 434.0h4.7v1.8h-4.7zM362.7 543.2h4.4v1.9h-4.4zM360.0 548.4h4.0v2.3h-4.0z" fill="#ffe85a"/>
</g>
<g filter="url(#gl)">
<path d="M398.4 366.0h2.4v1.7h-2.4zM411.8 366.0h4.8v2.3h-4.8zM434.2 376.4h3.6v2.4h-3.6zM391.0 386.8h4.4v2.3h-4.4zM396.9 397.2h5.1v2.2h-5.1zM412.8 423.2h5.1v2.4h-5.1zM423.7 464.8h3.5v1.6h-3.5zM395.5 506.4h4.8v2.0h-4.8zM433.0 532.4h4.2v1.5h-4.2z" fill="#e8e860"/>
<path d="M424.3 366.0h5.1v2.2h-5.1zM396.9 376.4h3.5v1.7h-3.5zM396.3 381.6h2.4v1.9h-2.4zM391.3 397.2h5.0v1.6h-5.0zM422.3 454.4h5.2v2.2h-5.2zM429.8 464.8h4.8v1.6h-4.8zM403.6 516.8h5.2v1.6h-5.2z" fill="#fff6a8"/>
<path d="M402.8 376.4h4.9v2.3h-4.9zM428.5 376.4h3.6v1.9h-3.6zM414.7 392.0h5.0v1.7h-5.0zM391.7 402.4h4.8v1.5h-4.8zM395.6 423.2h3.3v2.3h-3.3zM396.7 459.6h3.3v1.6h-3.3zM426.7 459.6h3.9v1.7h-3.9zM424.1 490.8h3.6v1.8h-3.6zM407.5 496.0h4.0v2.0h-4.0zM426.2 496.0h5.1v2.0h-5.1zM437.3 506.4h2.8v2.0h-2.8zM421.5 522.0h2.8v2.0h-2.8zM403.0 532.4h3.8v1.8h-3.8zM397.4 542.8h2.5v2.1h-2.5z" fill="#e0c030"/>
<path d="M396.4 386.8h4.5v2.4h-4.5zM432.8 392.0h2.4v1.5h-2.4zM390.6 407.6h3.1v1.7h-3.1zM397.5 407.6h2.6v2.1h-2.6zM402.0 428.4h5.0v2.0h-5.0zM390.2 449.2h3.3v1.6h-3.3zM396.8 449.2h4.3v1.5h-4.3zM421.6 459.6h5.0v1.9h-5.0zM417.4 464.8h3.0v1.9h-3.0zM409.4 501.2h3.0v2.2h-3.0zM422.7 501.2h2.6v2.2h-2.6zM410.3 516.8h2.5v1.6h-2.5zM390.7 522.0h4.1v2.0h-4.1zM415.0 527.2h3.0v2.1h-3.0zM396.6 532.4h4.8v2.0h-4.8zM415.7 532.4h2.7v1.6h-2.7zM403.9 537.6h3.0v1.7h-3.0z" fill="#ffe85a"/>
<path d="M409.2 392.0h3.5v1.7h-3.5zM398.3 402.4h4.6v2.2h-4.6zM415.0 402.4h4.4v1.6h-4.4zM391.6 418.0h3.0v2.3h-3.0zM427.5 418.0h4.5v1.8h-4.5zM390.0 444.0h3.1v1.7h-3.1zM409.4 449.2h4.0v1.9h-4.0zM427.6 454.4h3.8v1.5h-3.8zM398.4 464.8h4.6v1.7h-4.6zM395.8 470.0h2.8v1.6h-2.8zM435.9 475.2h4.6v1.9h-4.6zM390.0 511.6h4.6v1.8h-4.6zM428.9 516.8h4.0v1.9h-4.0zM433.4 527.2h4.0v2.3h-4.0zM421.8 532.4h4.5v1.9h-4.5zM427.5 532.4h3.2v2.1h-3.2zM432.2 537.6h5.1v1.9h-5.1z" fill="#f0d030"/>
<path d="M421.0 392.0h4.0v2.1h-4.0zM427.7 392.0h4.7v1.5h-4.7zM403.0 407.6h4.0v1.6h-4.0zM427.0 407.6h2.7v2.1h-2.7zM408.5 412.8h4.8v1.9h-4.8zM415.3 418.0h2.6v1.5h-2.6zM418.1 444.0h5.1v1.7h-5.1zM409.3 459.6h3.1v2.3h-3.1zM431.4 470.0h3.4v2.3h-3.4zM390.7 496.0h4.6v1.8h-4.6zM401.8 496.0h3.0v1.8h-3.0zM397.0 501.2h3.8v1.7h-3.8zM401.7 506.4h3.1v1.5h-3.1zM421.5 527.2h4.5v1.8h-4.5z" fill="#fff080"/>
<path d="M414.1 412.8h4.1v2.3h-4.1zM419.8 412.8h4.2v2.2h-4.2zM423.6 475.2h4.0v1.9h-4.0zM414.5 511.6h4.5v2.3h-4.5zM422.8 516.8h4.4v2.2h-4.4zM434.8 522.0h2.9v2.0h-2.9zM391.2 537.6h3.2v1.8h-3.2z" fill="#f6e040"/>
</g>
<g filter="url(#gl)">
<path d="M421.1 346.0h3.7v2.2h-3.7zM469.8 366.8h4.8v1.6h-4.8zM441.1 387.6h5.1v1.6h-5.1zM469.6 387.6h3.5v1.6h-3.5zM457.4 408.4h2.8v2.1h-2.8zM426.4 460.4h3.8v1.9h-3.8zM433.5 470.8h5.2v2.2h-5.2zM428.6 486.4h3.3v2.1h-3.3zM458.5 486.4h3.8v2.0h-3.8zM444.0 507.2h3.1v1.5h-3.1zM420.7 512.4h2.7v2.2h-2.7zM456.8 522.8h4.3v1.7h-4.3z" fill="#e0c030"/>
<path d="M463.9 346.0h3.8v2.2h-3.8zM426.9 392.8h3.6v2.0h-3.6zM426.8 465.6h4.8v2.2h-4.8zM458.8 470.8h4.9v2.0h-4.9zM464.5 470.8h4.7v2.1h-4.7zM446.0 486.4h4.7v1.9h-4.7z" fill="#fff080"/>
<path d="M465.2 356.4h3.4v1.8h-3.4zM432.6 366.8h3.8v2.3h-3.8zM469.6 372.0h4.7v1.6h-4.7zM427.5 377.2h2.9v1.8h-2.9zM438.3 403.2h3.9v2.3h-3.9zM421.8 418.8h3.9v1.6h-3.9zM467.4 418.8h4.5v1.6h-4.5zM426.4 424.0h3.6v1.6h-3.6zM457.1 424.0h2.6v1.8h-2.6zM468.5 439.6h5.1v1.7h-5.1zM443.6 450.0h3.5v1.5h-3.5zM433.3 455.2h3.1v2.3h-3.1zM443.7 460.4h3.1v1.6h-3.1zM451.0 481.2h3.4v1.6h-3.4zM450.4 507.2h4.8v1.5h-4.8z" fill="#e8e860"/>
<path d="M455.3 361.6h2.8v1.7h-2.8zM428.1 387.6h4.3v2.0h-4.3zM450.5 403.2h2.8v1.9h-2.8zM450.7 408.4h2.6v1.7h-2.6zM451.4 424.0h3.3v1.7h-3.3zM457.5 481.2h2.7v2.1h-2.7zM432.1 491.6h5.1v1.9h-5.1zM433.6 496.8h2.6v1.8h-2.6z" fill="#f6e040"/>
<path d="M457.2 366.8h4.6v2.3h-4.6zM434.0 372.0h3.4v1.8h-3.4zM462.0 439.6h3.0v2.3h-3.0zM438.1 450.0h4.7v2.3h-4.7zM469.5 491.6h4.7v1.9h-4.7zM463.4 496.8h4.4v2.2h-4.4z" fill="#f0d030"/>
<path d="M446.1 372.0h3.9v1.7h-3.9zM434.5 387.6h4.0v1.5h-4.0zM433.7 398.0h2.4v1.9h-2.4zM439.8 398.0h2.5v2.0h-2.5zM434.0 439.6h4.7v1.7h-4.7zM432.9 465.6h3.1v1.9h-3.1zM446.3 476.0h3.1v2.0h-3.1zM455.6 507.2h2.6v2.1h-2.6zM462.1 512.4h4.2v2.1h-4.2z" fill="#ffe85a"/>
<path d="M432.7 377.2h2.8v2.0h-2.8zM439.0 465.6h4.3v1.7h-4.3zM420.5 507.2h4.8v2.1h-4.8zM444.7 512.4h4.6v2.0h-4.6zM468.7 528.0h4.4v2.2h-4.4z" fill="#fff6a8"/>
</g>
<g filter="url(#gl)">
<path d="M480.0 458.0h3.7v1.8h-3.7zM486.3 494.4h2.7v2.1h-2.7zM492.0 494.4h4.7v2.4h-4.7zM494.2 499.6h2.4v2.0h-2.4zM500.7 499.6h2.5v1.9h-2.5zM524.3 515.2h3.6v1.8h-3.6z" fill="#f0d030"/>
<path d="M511.1 458.0h4.4v1.7h-4.4zM516.6 458.0h2.8v1.9h-2.8zM501.6 468.4h3.9v2.2h-3.9zM493.5 473.6h3.5v2.0h-3.5zM499.1 473.6h4.9v1.8h-4.9zM505.0 504.8h4.3v2.2h-4.3zM510.8 504.8h3.6v2.0h-3.6zM493.5 515.2h3.0v1.8h-3.0z" fill="#ffe85a"/>
<path d="M523.0 458.0h4.5v2.3h-4.5zM500.8 463.2h4.8v1.5h-4.8zM526.1 463.2h4.0v1.8h-4.0zM524.3 468.4h4.3v1.5h-4.3zM487.6 473.6h3.0v1.6h-3.0zM509.9 478.8h4.0v1.8h-4.0zM499.3 525.6h3.1v1.9h-3.1z" fill="#f6e040"/>
<path d="M488.2 463.2h3.9v1.6h-3.9zM481.7 478.8h4.2v1.5h-4.2zM516.1 489.2h4.9v2.1h-4.9zM517.2 504.8h3.9v2.3h-3.9z" fill="#e8e860"/>
<path d="M507.6 463.2h3.2v1.7h-3.2zM504.3 478.8h3.2v1.9h-3.2zM518.0 510.0h4.6v1.8h-4.6zM481.3 520.4h2.6v2.2h-2.6zM507.0 520.4h2.4v1.8h-2.4zM512.6 520.4h2.5v2.1h-2.5z" fill="#e0c030"/>
<path d="M488.6 468.4h4.7v1.8h-4.7zM504.6 473.6h4.2v1.7h-4.2zM516.8 478.8h3.0v1.7h-3.0zM498.6 494.4h4.4v2.0h-4.4zM505.0 510.0h3.8v1.9h-3.8zM487.6 520.4h4.5v2.3h-4.5zM519.1 520.4h4.5v2.2h-4.5z" fill="#fff080"/>
<path d="M481.7 473.6h3.2v1.9h-3.2zM515.7 473.6h2.8v1.7h-2.8zM486.0 489.2h3.0v1.9h-3.0zM505.8 499.6h4.6v2.1h-4.6zM500.8 520.4h3.9v2.0h-3.9z" fill="#fff6a8"/>
</g>
<g filter="url(#gl)">
<path d="M536.7 462.0h3.7v1.6h-3.7zM559.1 477.6h2.4v1.6h-2.4z" fill="#fff080"/>
<path d="M542.8 462.0h2.5v1.9h-2.5z" fill="#fff6a8"/>
<path d="M554.4 462.0h4.2v2.0h-4.2zM553.1 477.6h5.2v1.9h-5.2zM559.2 508.8h4.9v2.1h-4.9zM550.3 514.0h2.4v1.9h-2.4z" fill="#e0c030"/>
<path d="M542.7 477.6h3.3v2.1h-3.3zM547.9 477.6h4.3v1.6h-4.3zM536.2 508.8h3.4v1.9h-3.4zM546.9 508.8h3.8v1.8h-3.8zM557.2 514.0h4.0v1.7h-4.0z" fill="#e8e860"/>
<path d="M571.9 477.6h3.7v2.3h-3.7zM571.3 498.4h3.1v2.3h-3.1zM537.5 519.2h4.4v1.7h-4.4z" fill="#f6e040"/>
<path d="M537.0 503.6h2.9v1.8h-2.9zM544.5 514.0h3.2v1.6h-3.2z" fill="#ffe85a"/>
</g>
<g filter="url(#gl)">
<path d="M601.6 497.2h4.7v2.3h-4.7zM625.2 497.2h5.0v1.9h-5.0z" fill="#f0d030"/>
<path d="M607.0 497.2h3.6v2.2h-3.6zM590.1 507.6h4.0v2.0h-4.0z" fill="#e0c030"/>
<path d="M630.9 497.2h3.9v2.3h-3.9zM610.1 512.8h4.6v1.7h-4.6z" fill="#fff6a8"/>
<path d="M584.5 502.4h3.8v2.0h-3.8z" fill="#e8e860"/>
<path d="M584.7 507.6h4.6v2.0h-4.6z" fill="#fff080"/>
</g>
<g filter="url(#gl)">
<path d="M709.8 454.0h2.5v2.0h-2.5zM692.0 480.0h4.9v2.1h-4.9zM712.5 490.4h3.1v1.7h-3.1z" fill="#ffe85a"/>
<path d="M716.0 454.0h4.5v1.9h-4.5z" fill="#e0c030"/>
<path d="M724.4 459.2h3.8v2.2h-3.8zM729.8 459.2h3.2v2.1h-3.2zM704.8 474.8h2.6v2.3h-2.6zM734.5 474.8h3.6v1.5h-3.6zM709.8 480.0h3.5v1.7h-3.5zM718.8 490.4h3.8v1.8h-3.8zM722.4 495.6h2.9v2.3h-2.9z" fill="#f6e040"/>
<path d="M735.1 459.2h4.9v2.0h-4.9z" fill="#fff080"/>
<path d="M711.4 464.4h4.0v1.8h-4.0zM722.6 474.8h2.8v2.1h-2.8zM704.8 485.2h2.7v2.1h-2.7zM698.1 495.6h3.9v1.7h-3.9zM700.2 500.8h5.0v1.9h-5.0z" fill="#e8e860"/>
<path d="M698.8 474.8h2.5v1.9h-2.5zM736.5 490.4h3.4v1.8h-3.4zM716.4 495.6h3.1v2.2h-3.1z" fill="#fff6a8"/>
<path d="M692.4 485.2h4.8v2.1h-4.8z" fill="#f0d030"/>
</g>
<g filter="url(#gl)">
<path d="M750.6 442.0h3.4v2.3h-3.4zM792.3 452.4h3.6v1.8h-3.6zM758.5 478.4h3.0v1.7h-3.0z" fill="#fff6a8"/>
<path d="M776.3 447.2h4.5v1.9h-4.5zM785.5 452.4h4.2v1.6h-4.2z" fill="#f6e040"/>
<path d="M782.1 447.2h2.4v1.7h-2.4zM779.3 452.4h2.4v1.8h-2.4zM763.3 462.8h4.4v1.6h-4.4z" fill="#fff080"/>
<path d="M744.7 452.4h2.9v1.7h-2.9zM745.6 473.2h3.1v2.1h-3.1zM787.8 478.4h3.7v2.3h-3.7z" fill="#e0c030"/>
<path d="M781.6 462.8h2.6v2.4h-2.6zM752.0 478.4h5.1v1.7h-5.1z" fill="#f0d030"/>
<path d="M782.5 473.2h2.9v2.1h-2.9z" fill="#ffe85a"/>
<path d="M745.3 478.4h2.5v2.1h-2.5z" fill="#e8e860"/>
</g>
<rect x="67" y="318" width="34" height="1.6" fill="#a06078" opacity="0.8"/>
<rect x="67" y="324" width="34" height="1.6" fill="#a06078" opacity="0.8"/>
<rect x="67" y="330" width="34" height="1.6" fill="#a06078" opacity="0.8"/>
<ellipse cx="243" cy="311" rx="9" ry="5" fill="#d8ffd8" filter="url(#b2)"/><rect x="236" y="308" width="14" height="6" fill="#f4fff0"/>
<rect x="487" y="456.5" width="36" height="4" fill="#fff6c8"/><rect x="553" y="458" width="19" height="4.5" fill="#f0f8ff"/>
<rect x="418" y="486" width="24" height="3.5" fill="#eef"/>
<circle cx="103.0" cy="593.5" r="1.1" fill="#ff9030"/>
<circle cx="59.8" cy="592.9" r="1.7" fill="#ffd060"/>
<circle cx="11.1" cy="585.9" r="2.1" fill="#ff9030"/>
<circle cx="140.9" cy="590.6" r="2.0" fill="#ff9030"/>
<circle cx="41.2" cy="595.9" r="2.2" fill="#ffd060"/>
<circle cx="42.7" cy="604.3" r="1.7" fill="#ffb040"/>
<circle cx="40.7" cy="603.4" r="1.9" fill="#ff9030"/>
<circle cx="107.4" cy="595.2" r="2.0" fill="#ff9030"/>
<circle cx="50.4" cy="600.1" r="1.5" fill="#ffb040"/>
<circle cx="99.0" cy="595.8" r="1.4" fill="#ffb040"/>
<circle cx="33.4" cy="585.6" r="2.1" fill="#ffd060"/>
<circle cx="135.9" cy="590.8" r="1.5" fill="#ffb040"/>
<circle cx="23.6" cy="598.4" r="1.3" fill="#ffd060"/>
<circle cx="11.1" cy="586.4" r="1.9" fill="#ffb040"/>
<circle cx="40.2" cy="610.0" r="2.0" fill="#ffb040"/>
<circle cx="27.0" cy="598.7" r="2.1" fill="#ffd060"/>
<circle cx="5.4" cy="614.8" r="1.2" fill="#ffb040"/>
<circle cx="2.3" cy="587.5" r="1.4" fill="#ffb040"/>
<circle cx="136.6" cy="591.7" r="1.3" fill="#ffb040"/>
<circle cx="22.5" cy="602.7" r="2.0" fill="#ffb040"/>
<rect x="457" y="540" width="343" height="140" fill="#051815"/>
<rect x="330" y="575" width="45" height="105" fill="#061812"/>
<rect x="462" y="569.8" width="38" height="108.2" fill="#08201c"/>
<rect x="504" y="562.7" width="36" height="115.3" fill="#0a2620"/>
<rect x="548" y="560.0" width="52" height="118.0" fill="#08201c"/>
<rect x="606" y="556.3" width="44" height="121.7" fill="#071c1a"/>
<rect x="655" y="553.1" width="45" height="124.9" fill="#0a2620"/>
<rect x="704" y="548.1" width="44" height="129.9" fill="#0a2620"/>
<rect x="752" y="543.3" width="48" height="134.7" fill="#0a2620"/>
<g filter="url(#gl)">
<path d="M470.7 577.8h4.2v1.7h-4.2zM486.4 582.8h4.0v2.4h-4.0zM469.8 592.8h5.2v2.0h-5.2zM465.6 617.8h3.4v2.0h-3.4zM483.4 617.8h4.2v1.8h-4.2zM470.6 632.8h3.7v2.2h-3.7zM476.4 647.8h4.2v1.9h-4.2zM470.5 652.8h4.1v2.1h-4.1zM475.4 652.8h4.2v1.6h-4.2zM475.1 667.8h3.3v1.6h-3.3z" fill="#9ee090"/>
<path d="M496.4 577.8h4.3v1.9h-4.3zM470.2 622.8h5.0v2.0h-5.0zM465.9 637.8h4.3v1.7h-4.3zM465.5 642.8h2.6v2.2h-2.6zM495.5 667.8h2.5v2.4h-2.5z" fill="#ffd84a"/>
<path d="M470.4 582.8h4.4v1.5h-4.4zM491.6 582.8h4.9v2.4h-4.9zM492.1 587.8h2.4v1.7h-2.4zM465.7 597.8h2.9v2.2h-2.9zM484.8 622.8h4.3v2.4h-4.3zM489.6 622.8h3.9v2.1h-3.9zM491.0 642.8h3.7v2.1h-3.7z" fill="#fff080"/>
<path d="M476.4 582.8h3.0v2.0h-3.0zM481.5 582.8h4.2v2.0h-4.2zM475.2 587.8h3.3v1.9h-3.3zM486.3 592.8h3.7v1.7h-3.7zM492.1 612.8h3.7v1.5h-3.7zM464.7 622.8h4.8v1.9h-4.8zM475.9 642.8h3.3v2.0h-3.3zM486.7 647.8h4.5v2.2h-4.5z" fill="#c8e870"/>
<path d="M475.0 592.8h3.5v2.3h-3.5zM479.9 597.8h2.9v1.7h-2.9zM486.7 602.8h3.8v1.5h-3.8zM477.5 637.8h2.6v2.0h-2.6zM479.9 667.8h2.7v2.3h-2.7z" fill="#e8e060"/>
</g>
<g filter="url(#gl)">
<path d="M506.9 580.7h4.6v1.8h-4.6zM528.5 595.7h4.8v1.6h-4.8zM533.7 635.7h4.3v2.1h-4.3zM518.1 640.7h4.7v1.7h-4.7zM522.8 650.7h4.8v2.4h-4.8zM528.2 650.7h5.2v1.6h-5.2zM529.4 660.7h3.0v1.9h-3.0z" fill="#e8e060"/>
<path d="M506.1 590.7h2.7v1.8h-2.7zM507.1 600.7h3.1v2.2h-3.1zM512.5 605.7h3.8v1.7h-3.8zM525.7 610.7h2.5v2.0h-2.5z" fill="#9ee090"/>
<path d="M511.9 590.7h4.7v1.5h-4.7zM534.4 595.7h4.8v1.8h-4.8zM524.1 605.7h5.0v1.8h-5.0zM513.6 610.7h4.3v1.7h-4.3zM526.9 625.7h4.5v1.7h-4.5zM512.3 650.7h3.1v1.6h-3.1z" fill="#ffd84a"/>
<path d="M507.0 605.7h3.6v1.6h-3.6zM522.6 615.7h5.1v1.7h-5.1zM532.7 615.7h2.4v1.9h-2.4zM511.1 625.7h5.2v2.0h-5.2zM512.5 660.7h5.0v2.4h-5.0z" fill="#fff080"/>
<path d="M513.3 635.7h4.0v1.7h-4.0zM507.6 640.7h3.8v2.0h-3.8z" fill="#c8e870"/>
</g>
<g filter="url(#gl)">
<path d="M556.6 573.0h4.0v2.3h-4.0zM562.4 593.0h4.4v2.0h-4.4zM572.8 593.0h2.9v2.3h-2.9zM556.8 603.0h3.6v2.2h-3.6zM577.7 603.0h4.4v1.8h-4.4zM576.7 613.0h3.9v1.9h-3.9zM572.8 623.0h2.9v2.4h-2.9zM594.7 623.0h3.3v1.6h-3.3zM565.7 628.0h5.1v2.1h-5.1zM550.3 633.0h3.5v1.8h-3.5zM594.0 633.0h4.8v1.8h-4.8zM555.8 638.0h2.4v2.3h-2.4zM565.4 638.0h4.6v2.0h-4.6zM589.3 648.0h2.7v1.9h-2.7zM550.3 653.0h4.6v1.6h-4.6zM560.9 653.0h4.9v1.6h-4.9z" fill="#c8e870"/>
<path d="M561.2 573.0h3.0v2.1h-3.0zM566.6 573.0h2.7v1.7h-2.7zM582.4 578.0h3.5v1.6h-3.5zM585.1 598.0h3.4v1.8h-3.4zM596.9 598.0h3.0v1.9h-3.0zM550.9 613.0h4.5v1.8h-4.5zM556.5 613.0h4.1v1.8h-4.1zM571.4 613.0h3.3v1.9h-3.3zM566.2 618.0h4.2v1.8h-4.2zM560.7 638.0h3.2v2.3h-3.2zM583.7 648.0h4.1v2.4h-4.1zM594.3 653.0h4.3v1.8h-4.3z" fill="#fff080"/>
<path d="M567.8 593.0h4.8v1.6h-4.8zM572.3 603.0h4.5v2.2h-4.5zM566.5 613.0h4.9v2.3h-4.9zM556.0 618.0h3.8v1.5h-3.8zM561.2 618.0h2.8v2.1h-2.8zM566.9 623.0h2.7v1.7h-2.7zM583.1 623.0h4.4v2.2h-4.4zM587.6 628.0h4.2v2.1h-4.2zM565.6 633.0h4.5v2.1h-4.5zM581.7 633.0h4.3v2.1h-4.3zM586.6 638.0h2.4v2.0h-2.4zM573.3 663.0h5.0v2.2h-5.0z" fill="#ffd84a"/>
<path d="M551.6 598.0h3.7v1.5h-3.7zM594.6 603.0h3.2v2.0h-3.2zM550.9 618.0h5.0v2.3h-5.0zM588.9 623.0h5.0v1.8h-5.0zM551.0 638.0h4.4v1.9h-4.4zM556.6 663.0h3.1v1.9h-3.1zM578.4 663.0h2.5v2.3h-2.5zM595.1 663.0h3.0v2.1h-3.0zM551.0 668.0h2.9v1.8h-2.9z" fill="#9ee090"/>
<path d="M579.6 598.0h4.7v2.1h-4.7zM588.6 603.0h4.4v2.0h-4.4zM561.8 613.0h4.7v2.3h-4.7zM551.3 623.0h2.7v1.9h-2.7zM571.4 628.0h5.0v1.7h-5.0z" fill="#e8e060"/>
</g>
<g filter="url(#gl)">
<path d="M614.8 569.3h3.8v2.2h-3.8zM637.7 569.3h2.7v1.9h-2.7zM645.9 574.3h3.4v2.2h-3.4zM624.9 599.3h2.5v2.1h-2.5zM634.3 614.3h4.2v1.9h-4.2zM608.8 619.3h2.6v1.7h-2.6zM629.5 624.3h4.6v2.3h-4.6zM609.7 634.3h4.9v1.7h-4.9zM631.2 634.3h2.8v1.8h-2.8zM641.5 664.3h4.0v1.5h-4.0z" fill="#c8e870"/>
<path d="M620.7 569.3h3.1v2.1h-3.1zM631.2 579.3h4.3v1.9h-4.3zM614.1 584.3h3.1v2.0h-3.1zM625.1 589.3h4.5v2.0h-4.5zM609.3 599.3h4.2v2.0h-4.2z" fill="#ffd84a"/>
<path d="M626.8 569.3h3.4v1.7h-3.4zM639.8 574.3h4.9v1.7h-4.9zM619.5 579.3h4.5v2.1h-4.5zM620.0 589.3h4.4v2.3h-4.4zM646.1 589.3h3.5v1.7h-3.5zM631.0 594.3h4.7v2.3h-4.7zM619.3 599.3h2.9v2.1h-2.9zM609.1 609.3h2.4v1.6h-2.4zM619.6 619.3h2.6v2.3h-2.6zM631.9 644.3h4.8v2.2h-4.8zM608.7 649.3h3.7v1.8h-3.7zM614.8 649.3h5.2v2.4h-5.2zM614.2 664.3h4.2v1.5h-4.2z" fill="#9ee090"/>
<path d="M634.1 574.3h2.9v1.6h-2.9zM608.4 584.3h4.4v2.3h-4.4zM614.4 589.3h4.2v2.0h-4.2zM636.5 599.3h3.1v1.9h-3.1zM629.8 604.3h3.5v1.7h-3.5zM645.6 604.3h4.5v2.3h-4.5zM644.0 619.3h3.9v1.8h-3.9zM624.2 624.3h3.3v1.6h-3.3zM615.4 644.3h2.8v1.8h-2.8zM620.0 649.3h2.5v1.8h-2.5zM631.0 654.3h3.7v2.0h-3.7zM614.9 659.3h2.5v2.0h-2.5zM631.3 664.3h3.8v1.8h-3.8z" fill="#e8e060"/>
<path d="M634.9 584.3h5.0v1.5h-5.0zM640.4 584.3h2.6v1.9h-2.6zM614.6 594.3h4.8v1.6h-4.8zM636.0 594.3h2.7v1.6h-2.7zM646.6 634.3h4.3v2.0h-4.3zM631.1 649.3h2.8v2.2h-2.8zM642.3 649.3h3.1v2.3h-3.1zM609.5 664.3h2.6v1.7h-2.6zM625.4 664.3h2.8v1.9h-2.8z" fill="#fff080"/>
</g>
<g filter="url(#gl)">
<path d="M657.1 561.1h4.7v2.3h-4.7zM657.1 576.1h3.7v1.8h-3.7zM664.9 591.1h2.9v2.0h-2.9zM673.6 606.1h3.3v1.5h-3.3zM693.7 606.1h4.4v1.5h-4.4zM657.0 621.1h4.6v2.1h-4.6zM686.1 621.1h4.9v1.6h-4.9zM679.1 626.1h4.8v1.5h-4.8zM688.3 636.1h3.9v1.9h-3.9zM674.7 641.1h2.9v1.8h-2.9zM669.0 651.1h3.8v2.2h-3.8zM690.2 656.1h3.1v2.3h-3.1zM675.8 666.1h3.4v1.7h-3.4z" fill="#c8e870"/>
<path d="M657.9 566.1h2.7v2.1h-2.7zM657.8 596.1h4.4v1.9h-4.4zM658.2 601.1h3.5v1.8h-3.5zM674.0 601.1h4.9v1.8h-4.9zM683.8 601.1h5.2v2.3h-5.2zM666.9 611.1h5.2v2.3h-5.2zM670.2 631.1h3.5v1.5h-3.5zM681.0 631.1h3.3v2.4h-3.3zM692.1 651.1h3.0v2.2h-3.0zM658.4 661.1h2.9v1.8h-2.9zM664.7 666.1h5.2v1.6h-5.2z" fill="#9ee090"/>
<path d="M691.5 566.1h3.2v2.0h-3.2zM690.9 581.1h2.5v2.2h-2.5zM670.1 591.1h4.9v1.6h-4.9zM669.1 601.1h5.1v1.9h-5.1zM658.0 616.1h4.9v1.5h-4.9zM690.4 626.1h3.4v1.6h-3.4zM657.9 641.1h3.5v2.0h-3.5zM668.8 656.1h5.0v1.6h-5.0zM663.0 661.1h4.5v1.6h-4.5zM670.0 666.1h3.3v1.8h-3.3z" fill="#fff080"/>
<path d="M696.4 566.1h2.7v2.1h-2.7zM697.0 576.1h4.6v2.3h-4.6zM687.4 611.1h4.7v2.2h-4.7zM693.3 611.1h2.8v1.8h-2.8zM684.3 616.1h4.9v1.6h-4.9zM668.6 621.1h3.7v2.2h-3.7zM657.4 656.1h4.6v2.1h-4.6z" fill="#e8e060"/>
<path d="M673.7 576.1h3.7v1.6h-3.7zM680.6 591.1h3.3v1.7h-3.3zM673.2 596.1h2.4v2.0h-2.4zM684.4 626.1h4.4v1.9h-4.4zM664.3 631.1h4.8v2.4h-4.8zM668.9 661.1h3.0v2.2h-3.0zM680.7 661.1h4.3v1.5h-4.3z" fill="#ffd84a"/>
</g>
<g filter="url(#gl)">
<path d="M707.7 556.1h2.6v2.1h-2.6zM728.1 556.1h2.8v2.1h-2.8zM711.5 596.1h2.8v2.2h-2.8zM711.8 611.1h4.4v1.7h-4.4zM706.6 641.1h2.9v1.7h-2.9zM718.4 651.1h4.0v2.2h-4.0zM726.9 656.1h3.3v1.7h-3.3z" fill="#fff080"/>
<path d="M712.5 556.1h3.9v2.1h-3.9zM735.4 566.1h4.1v2.3h-4.1zM713.2 621.1h4.8v1.5h-4.8zM729.2 621.1h4.6v1.5h-4.6zM724.1 631.1h4.5v2.3h-4.5zM712.8 641.1h3.6v2.0h-3.6z" fill="#c8e870"/>
<path d="M717.6 556.1h2.6v1.7h-2.6zM723.6 576.1h2.8v2.2h-2.8zM729.5 576.1h2.8v1.8h-2.8zM739.5 586.1h5.0v1.9h-5.0zM738.3 591.1h3.9v2.4h-3.9zM711.7 606.1h2.8v1.9h-2.8zM722.8 606.1h4.9v2.4h-4.9zM718.5 626.1h3.9v2.3h-3.9zM729.1 631.1h2.5v1.9h-2.5zM706.8 646.1h2.8v1.8h-2.8zM728.4 651.1h5.1v2.1h-5.1zM738.8 651.1h3.3v1.8h-3.3z" fill="#e8e060"/>
<path d="M722.8 556.1h2.5v1.8h-2.5zM733.9 556.1h3.4v1.9h-3.4zM733.1 561.1h3.7v2.3h-3.7zM713.1 566.1h4.9v1.9h-4.9zM740.7 566.1h4.0v1.5h-4.0zM737.5 571.1h3.1v2.1h-3.1zM744.9 586.1h4.2v1.6h-4.2zM716.3 596.1h2.4v2.3h-2.4zM744.8 616.1h3.9v2.0h-3.9zM724.0 636.1h3.5v2.0h-3.5zM728.8 641.1h4.3v2.0h-4.3zM740.6 641.1h3.6v2.0h-3.6zM706.9 651.1h4.8v1.7h-4.8z" fill="#9ee090"/>
<path d="M712.2 561.1h4.1v2.0h-4.1zM712.9 576.1h4.6v1.9h-4.6zM706.7 611.1h4.7v1.6h-4.7zM744.7 611.1h2.5v1.7h-2.5zM717.8 616.1h4.8v2.0h-4.8zM707.5 621.1h3.3v2.2h-3.3zM719.2 621.1h2.7v2.0h-2.7zM713.2 631.1h4.6v2.1h-4.6zM723.6 651.1h3.1v1.8h-3.1zM706.5 656.1h3.0v1.7h-3.0zM740.9 666.1h2.7v1.9h-2.7z" fill="#ffd84a"/>
</g>
<g filter="url(#gl)">
<path d="M763.7 551.3h2.5v2.0h-2.5zM755.2 571.3h4.5v2.0h-4.5zM765.5 576.3h3.0v2.0h-3.0zM791.1 586.3h3.0v2.2h-3.0zM758.9 596.3h4.4v2.1h-4.4zM769.1 596.3h2.5v1.9h-2.5zM765.3 606.3h2.5v2.2h-2.5zM770.3 606.3h4.1v1.9h-4.1zM769.9 621.3h4.2v2.0h-4.2zM775.0 621.3h3.2v1.8h-3.2zM755.1 626.3h3.5v1.7h-3.5z" fill="#e8e060"/>
<path d="M773.5 551.3h5.2v1.8h-5.2zM779.6 551.3h2.9v2.4h-2.9zM760.9 561.3h4.6v1.9h-4.6zM755.9 566.3h2.5v1.8h-2.5zM796.4 586.3h2.9v1.8h-2.9zM754.2 611.3h3.0v1.8h-3.0zM769.7 616.3h3.1v2.4h-3.1zM766.8 641.3h4.7v2.4h-4.7z" fill="#fff080"/>
<path d="M789.5 551.3h4.8v1.6h-4.8zM794.7 551.3h4.5v1.8h-4.5zM787.5 561.3h3.7v1.7h-3.7zM761.7 566.3h3.1v2.2h-3.1zM767.9 566.3h4.3v2.3h-4.3zM771.4 576.3h4.3v2.2h-4.3zM769.4 611.3h3.7v1.8h-3.7zM786.0 611.3h4.9v2.3h-4.9zM793.5 626.3h4.1v1.9h-4.1zM759.4 636.3h4.6v2.2h-4.6zM782.5 636.3h4.2v1.6h-4.2zM775.7 656.3h3.3v1.7h-3.3zM775.9 666.3h2.7v2.0h-2.7z" fill="#c8e870"/>
<path d="M770.7 561.3h4.4v1.7h-4.4zM790.4 596.3h4.2v2.2h-4.2zM759.5 616.3h4.8v2.2h-4.8zM765.2 636.3h3.1v1.6h-3.1zM755.8 641.3h5.0v2.4h-5.0zM754.8 666.3h3.9v1.9h-3.9zM770.3 666.3h4.2v1.5h-4.2zM791.4 666.3h3.1v2.1h-3.1z" fill="#ffd84a"/>
<path d="M787.9 571.3h4.1v1.8h-4.1zM770.0 586.3h3.5v2.2h-3.5zM774.4 596.3h4.7v2.1h-4.7zM775.1 616.3h4.0v2.2h-4.0zM759.1 621.3h4.7v2.0h-4.7zM760.7 626.3h4.0v2.3h-4.0zM754.2 636.3h5.2v2.3h-5.2zM755.9 651.3h3.3v1.8h-3.3zM754.7 661.3h3.3v2.0h-3.3z" fill="#9ee090"/>
</g>
<g filter="url(#gl)">
<path d="M345.2 595.0h3.1v2.2h-3.1zM345.9 600.0h4.0v1.5h-4.0zM368.5 600.0h4.7v1.5h-4.7zM362.2 610.0h3.0v1.5h-3.0zM345.4 630.0h3.7v1.6h-3.7zM346.3 635.0h3.3v2.2h-3.3zM340.1 655.0h2.7v2.1h-2.7zM345.3 655.0h3.0v1.7h-3.0zM334.1 660.0h4.7v1.8h-4.7zM345.4 660.0h4.2v2.0h-4.2z" fill="#c8e870"/>
<path d="M356.8 600.0h5.0v1.7h-5.0zM358.3 605.0h4.4v1.6h-4.4zM341.2 640.0h2.7v2.1h-2.7zM356.1 645.0h3.1v2.2h-3.1zM360.9 650.0h5.0v2.1h-5.0z" fill="#9ee090"/>
<path d="M362.8 600.0h4.3v2.0h-4.3zM363.1 625.0h3.4v2.0h-3.4zM362.1 635.0h4.1v2.1h-4.1zM340.7 645.0h3.7v2.0h-3.7z" fill="#fff080"/>
<path d="M341.5 605.0h2.7v1.6h-2.7zM347.0 610.0h4.7v2.1h-4.7zM335.0 625.0h3.9v2.3h-3.9zM335.8 635.0h5.1v1.6h-5.1zM357.0 635.0h2.8v2.1h-2.8zM335.8 665.0h3.2v1.6h-3.2z" fill="#e8e060"/>
<path d="M341.2 610.0h5.0v1.5h-5.0zM369.2 615.0h4.2v1.6h-4.2zM368.2 635.0h3.5v1.6h-3.5zM367.0 640.0h3.6v2.1h-3.6zM334.7 650.0h3.0v1.5h-3.0zM366.6 660.0h3.7v2.0h-3.7zM341.5 665.0h4.2v2.0h-4.2z" fill="#ffd84a"/>
</g>
<rect x="388" y="590" width="54" height="80" fill="#0a2a20"/>
<g filter="url(#gl)">
<path d="M403.0 600.0h2.7v1.8h-2.7zM397.7 610.0h4.5v1.9h-4.5zM423.0 610.0h4.8v2.4h-4.8zM428.1 635.0h3.8v2.0h-3.8zM410.2 650.0h3.9v2.1h-3.9z" fill="#e8e060"/>
<path d="M408.3 600.0h4.3v2.1h-4.3zM420.6 630.0h2.9v1.7h-2.9zM433.9 640.0h3.3v1.5h-3.3zM399.5 645.0h3.9v2.1h-3.9zM399.4 650.0h3.8v1.5h-3.8zM425.2 660.0h2.6v2.1h-2.6zM436.1 660.0h4.1v2.0h-4.1z" fill="#fff080"/>
<path d="M429.3 600.0h4.3v1.9h-4.3zM393.4 605.0h4.8v1.9h-4.8zM420.6 615.0h4.2v1.7h-4.2zM431.2 615.0h3.3v1.6h-3.3zM436.8 615.0h2.8v2.2h-2.8zM416.7 625.0h3.1v1.9h-3.1zM422.3 625.0h3.5v2.2h-3.5zM426.8 650.0h5.0v2.2h-5.0z" fill="#ffd84a"/>
<path d="M431.6 605.0h3.4v2.3h-3.4zM428.6 610.0h4.8v2.0h-4.8zM393.8 615.0h3.6v2.4h-3.6zM433.5 620.0h4.6v2.2h-4.6zM426.4 630.0h5.1v2.4h-5.1zM431.5 630.0h4.4v2.0h-4.4zM427.8 645.0h4.0v1.9h-4.0zM433.3 645.0h3.2v2.0h-3.2z" fill="#c8e870"/>
<path d="M392.7 610.0h3.2v2.1h-3.2zM404.7 615.0h3.6v1.8h-3.6zM402.8 620.0h4.1v2.0h-4.1zM413.1 620.0h4.6v2.4h-4.6zM412.0 625.0h3.8v2.0h-3.8zM422.7 635.0h3.8v2.3h-3.8zM422.9 640.0h2.6v1.5h-2.6zM405.6 645.0h4.6v2.0h-4.6zM404.3 650.0h4.5v2.2h-4.5zM393.4 660.0h3.7v1.5h-3.7z" fill="#9ee090"/>
</g>
<rect x="0" y="640" width="195" height="50" fill="#06120e"/>
<rect x="22" y="639.0" width="2.4" height="46.0" fill="#d8ffe0" opacity="0.85"/>
<rect x="72" y="632.7" width="2.4" height="52.3" fill="#d8ffe0" opacity="0.85"/>
<rect x="130" y="625.4" width="2.4" height="59.6" fill="#d8ffe0" opacity="0.85"/>
<rect x="140" y="624.2" width="2.4" height="60.8" fill="#d8ffe0" opacity="0.85"/>
<rect x="86" y="652" width="34" height="8" fill="#ffd23a"/><rect x="86" y="668" width="32" height="12" fill="#f2b81e"/><rect x="150" y="655" width="32" height="22" fill="#0c2a3a"/>
<g filter="url(#gl)">
<path d="M156.7 645.0h3.0v2.1h-3.0zM180.3 655.0h2.5v2.4h-2.5zM177.0 670.0h4.4v2.4h-4.4z" fill="#e0c030"/>
<path d="M166.9 645.0h4.0v1.7h-4.0zM161.0 650.0h3.4v1.9h-3.4zM169.9 655.0h2.9v1.7h-2.9zM156.2 660.0h3.3v1.8h-3.3z" fill="#fff080"/>
<path d="M172.2 645.0h3.0v1.9h-3.0zM180.0 675.0h5.0v2.1h-5.0z" fill="#e8e860"/>
<path d="M177.8 645.0h4.4v2.2h-4.4z" fill="#f6e040"/>
<path d="M166.5 660.0h3.6v2.3h-3.6zM155.8 670.0h4.2v1.6h-4.2zM151.5 675.0h5.1v2.2h-5.1zM175.5 675.0h4.8v1.8h-4.8z" fill="#ffe85a"/>
<path d="M165.6 675.0h2.6v2.3h-2.6z" fill="#f0d030"/>
</g>
<circle cx="191.9" cy="677.8" r="1.0" fill="#a0ffb0"/>
<circle cx="59.9" cy="672.8" r="1.7" fill="#ffb030"/>
<circle cx="62.7" cy="681.1" r="1.7" fill="#ffd040"/>
<circle cx="33.9" cy="678.4" r="1.5" fill="#ffb030"/>
<circle cx="23.1" cy="683.1" r="1.0" fill="#fff080"/>
<circle cx="111.8" cy="677.5" r="1.2" fill="#ffb030"/>
<circle cx="103.4" cy="685.4" r="1.7" fill="#ffb030"/>
<circle cx="45.3" cy="685.0" r="0.9" fill="#a0ffb0"/>
<circle cx="54.3" cy="678.8" r="1.2" fill="#ffb030"/>
<circle cx="97.8" cy="673.3" r="1.0" fill="#ffd040"/>
<circle cx="49.1" cy="675.3" r="1.5" fill="#ffd040"/>
<circle cx="107.3" cy="681.3" r="1.5" fill="#a0ffb0"/>
<circle cx="192.3" cy="682.8" r="1.1" fill="#a0ffb0"/>
<circle cx="175.9" cy="685.7" r="1.6" fill="#ffd040"/>
<circle cx="143.2" cy="680.5" r="1.4" fill="#ffb030"/>
<circle cx="160.9" cy="679.8" r="1.0" fill="#fff080"/>
<circle cx="20.7" cy="677.8" r="1.2" fill="#a0ffb0"/>
<circle cx="30.9" cy="685.6" r="1.1" fill="#fff080"/>
<circle cx="175.3" cy="673.7" r="1.2" fill="#ffd040"/>
<circle cx="142.3" cy="685.7" r="1.5" fill="#fff080"/>
<circle cx="112.1" cy="681.3" r="1.1" fill="#a0ffb0"/>
<circle cx="16.1" cy="676.9" r="1.8" fill="#ffb030"/>
<circle cx="125.8" cy="680.8" r="1.6" fill="#fff080"/>
<circle cx="184.3" cy="676.8" r="1.8" fill="#a0ffb0"/>
<circle cx="150.4" cy="681.5" r="1.7" fill="#ffd040"/>
<circle cx="50.2" cy="679.4" r="0.9" fill="#ffb030"/>
<circle cx="105.4" cy="683.4" r="1.4" fill="#a0ffb0"/>
<circle cx="23.8" cy="673.5" r="1.3" fill="#ffd040"/>
<circle cx="13.8" cy="681.0" r="1.3" fill="#ffd040"/>
<circle cx="63.4" cy="684.6" r="1.6" fill="#ffb030"/>
<circle cx="12.1" cy="675.5" r="1.6" fill="#a0ffb0"/>
<circle cx="110.7" cy="672.8" r="1.3" fill="#ffd040"/>
<circle cx="123.4" cy="679.2" r="1.4" fill="#ffd040"/>
<circle cx="41.2" cy="681.3" r="1.4" fill="#ffb030"/>
<circle cx="29.6" cy="682.7" r="1.7" fill="#ffb030"/>
<circle cx="10.0" cy="672.9" r="1.1" fill="#ffd040"/>
<circle cx="139.7" cy="682.5" r="1.3" fill="#fff080"/>
<circle cx="193.3" cy="681.9" r="1.6" fill="#ffd040"/>
<circle cx="148.5" cy="680.8" r="0.9" fill="#a0ffb0"/>
<circle cx="32.8" cy="674.2" r="1.1" fill="#a0ffb0"/>
<path d="M252.4 554.5V563.5M258.8 546.9V562.9M265.2 539.3V562.3M271.6 531.7V561.7M278.0 524.1V561.1M284.4 515.7V560.4M290.8 506.3V559.8M297.2 496.8V559.2M303.6 487.4V558.6M310.0 477.9V558.0M316.4 468.4V557.4M322.8 459.0V556.7M329.2 447.0V556.1M335.6 433.1V555.5M342.0 419.3V554.9M348.4 405.4V554.3M354.8 391.6V553.7M361.2 377.7V553.0M367.6 363.9V552.4M462.0 356.5V535.8M469.2 373.2V534.5M476.4 386.4V533.2M483.6 399.2V531.9M490.8 407.2V530.7M498.0 414.5V529.4M505.2 421.7V528.4M512.4 429.0V527.6M519.6 436.0V526.8M526.8 441.8V526.0M534.0 447.5V525.2M541.2 453.3V524.4M548.4 459.1V523.6M555.6 464.5V522.7M562.8 469.5V521.9M570.0 474.5V521.1M577.2 479.5V520.3M584.4 484.4V519.5M591.6 489.4V518.7M598.8 493.0V517.9M606.0 495.9V517.1M613.2 498.8V516.3M620.4 501.8V515.4M627.6 503.4V514.6M634.8 504.9V513.8M642.0 506.4V513.0M652.0 500.7V511.9M660.5 497.8V510.9M669.0 495.0V509.9M677.5 492.2V508.9M686.0 489.3V508.0M694.5 486.0V507.0M703.0 482.1V506.0M711.5 478.2V505.0M720.0 474.4V504.0M728.5 470.5V503.1M737.0 466.6V502.1M745.5 462.7V501.1M754.0 457.9V500.1M762.5 453.1V499.1M771.0 448.3V498.1M779.5 443.5V497.2M788.0 438.7V496.2M796.5 434.0V495.2" stroke="#3a4a78" stroke-width="1" opacity="0.7" fill="none"/>
<path d="M252.4 554.5V563.5M258.8 546.9V562.9M265.2 539.3V562.3M271.6 531.7V561.7M278.0 524.1V561.1M284.4 515.7V560.4M290.8 506.3V559.8M297.2 496.8V559.2M303.6 487.4V558.6M310.0 477.9V558.0M316.4 468.4V557.4M322.8 459.0V556.7M329.2 447.0V556.1M335.6 433.1V555.5M342.0 419.3V554.9M348.4 405.4V554.3M354.8 391.6V553.7M361.2 377.7V553.0M367.6 363.9V552.4M462.0 356.5V535.8M469.2 373.2V534.5M476.4 386.4V533.2M483.6 399.2V531.9M490.8 407.2V530.7M498.0 414.5V529.4M505.2 421.7V528.4M512.4 429.0V527.6M519.6 436.0V526.8M526.8 441.8V526.0M534.0 447.5V525.2M541.2 453.3V524.4M548.4 459.1V523.6M555.6 464.5V522.7" stroke="#e4eaff" stroke-width="2.5" stroke-linecap="round" stroke-dasharray="0.1 5.4" fill="none"/>
<path d="M562.8 469.5V521.9M570.0 474.5V521.1M577.2 479.5V520.3M584.4 484.4V519.5M591.6 489.4V518.7M598.8 493.0V517.9M606.0 495.9V517.1M613.2 498.8V516.3M620.4 501.8V515.4M627.6 503.4V514.6M634.8 504.9V513.8M642.0 506.4V513.0M652.0 500.7V511.9M660.5 497.8V510.9M669.0 495.0V509.9M677.5 492.2V508.9M686.0 489.3V508.0M694.5 486.0V507.0M703.0 482.1V506.0M711.5 478.2V505.0M720.0 474.4V504.0M728.5 470.5V503.1M737.0 466.6V502.1M745.5 462.7V501.1M754.0 457.9V500.1M762.5 453.1V499.1M771.0 448.3V498.1M779.5 443.5V497.2M788.0 438.7V496.2M796.5 434.0V495.2" stroke="#ecd8ff" stroke-width="3" stroke-linecap="round" stroke-dasharray="0.1 8.5" fill="none"/>
<path d="M336.0 539.6V555.5M342.1 531.7V554.9M348.2 523.7V554.3M354.3 515.8V553.7M360.4 507.8V553.1M366.5 499.9V552.5M390.9 459.3V548.6M397.0 448.9V547.5M403.1 438.4V546.4M409.2 427.9V545.3M415.3 417.5V544.2M421.4 407.0V543.1M427.5 394.6V542.0M433.6 381.9V540.9M439.7 369.2V539.8M445.8 356.6V538.7" stroke="#c8d0ff" stroke-width="1.7" stroke-linecap="round" stroke-dasharray="0.1 5.6" fill="none" opacity="0.8"/>
<polyline points="374.0,350.0 325.5,455.0 281.5,520.0 241.0,568.0" fill="none" stroke="#e6c8f0" stroke-width="1.4" opacity="0.9"/>
<polyline points="374.0,350.0 325.5,455.0 281.5,520.0 241.0,568.0" fill="none" stroke="#fff" stroke-width="2.6" stroke-linecap="round" stroke-dasharray="0.1 7"/>
<polyline points="448.0,352.0 422.0,406.0 369.5,496.0 335.7,540.0 328.0,552.0" fill="none" stroke="#f0c0e0" stroke-width="1.4" opacity="0.9"/>
<polyline points="448.0,352.0 422.0,406.0 369.5,496.0 335.7,540.0 328.0,552.0" fill="none" stroke="#fff" stroke-width="2.6" stroke-linecap="round" stroke-dasharray="0.1 7"/>
<polyline points="457.0,345.0 470.0,375.0 484.6,401.0 518.4,435.0 552.0,462.0 579.0,480.7 594.0,491.0 621.0,502.0 640.0,506.0" fill="none" stroke="#e8d8ff" stroke-width="1.4" opacity="0.9"/>
<polyline points="457.0,345.0 470.0,375.0 484.6,401.0 518.4,435.0 552.0,462.0 579.0,480.7 594.0,491.0 621.0,502.0 640.0,506.0" fill="none" stroke="#fff" stroke-width="2.6" stroke-linecap="round" stroke-dasharray="0.1 7"/>
<polyline points="636.0,506.0 690.0,488.0 745.0,463.0 775.0,446.0 800.0,432.0" fill="none" stroke="#ffc8e8" stroke-width="1.4" opacity="0.9"/>
<polyline points="636.0,506.0 690.0,488.0 745.0,463.0 775.0,446.0 800.0,432.0" fill="none" stroke="#fff" stroke-width="2.6" stroke-linecap="round" stroke-dasharray="0.1 7"/>
<circle cx="627" cy="472" r="4" fill="#ffb040" filter="url(#b1)"/><circle cx="627" cy="472" r="1.8" fill="#fff0c0"/>
<circle cx="655" cy="476" r="4" fill="#ffb040" filter="url(#b1)"/><circle cx="655" cy="476" r="1.8" fill="#fff0c0"/>
<path d="M698 462 q6 -10 14 -8 q6 -8 10 0 q-2 8 -12 8 z" fill="#fff" filter="url(#b1)"/>
<g>
<path d="M366 340h28v330h-28zM436 340h28v330h-28z" fill="#bff5e0" opacity="0.35" filter="url(#b4)"/>
<path d="M373 342h15.5V668h-17.5zM441 342h16.5l1.5 326h-19z" fill="#eef7f2"/>
<path d="M388 372 Q392 388 414.5 389 Q437 388 441 372 V432 Q437 410 414.5 405 Q392 410 388 432Z" fill="#eef7f2"/>
<path d="M388 583 H441 V622 Q438 604 414.5 600 Q391 604 388 622Z" fill="#dff5ea"/>
<path d="M369 640h21v30h-23zM439 640h21l2 30h-24z" fill="#cfeede"/>
<rect x="362" y="666" width="106" height="6" fill="#9ad4b8"/>
<path d="M371 590h19v78h-19zM439 590h21v78h-21z" fill="#58d8a0" opacity="0.28"/>
<circle cx="380" cy="341" r="2" fill="#ff6060"/><circle cx="449" cy="342" r="2" fill="#ff6060"/>
</g>
<polygon points="20.0,616.0 26.0,614.9 32.0,613.8 38.0,612.8 44.0,611.7 50.0,610.6 56.0,609.6 62.0,608.5 68.0,607.4 74.0,606.4 80.0,605.3 86.0,604.2 92.0,603.2 98.0,602.1 104.0,601.0 110.0,600.0 116.0,598.9 122.0,597.8 128.0,596.8 134.0,595.7 140.0,594.7 146.0,593.6 152.0,592.5 158.0,591.5 164.0,590.4 170.0,589.3 176.0,588.3 182.0,587.2 188.0,586.1 194.0,585.1 194.0,616.4 188.0,617.1 182.0,617.9 176.0,618.6 170.0,619.4 164.0,620.1 158.0,620.9 152.0,621.6 146.0,622.4 140.0,623.2 134.0,623.9 128.0,624.7 122.0,625.4 116.0,626.2 110.0,626.9 104.0,627.7 98.0,628.4 92.0,629.2 86.0,629.9 80.0,630.7 74.0,631.5 68.0,632.2 62.0,633.0 56.0,633.7 50.0,634.5 44.0,635.2 38.0,636.0 32.0,636.7 26.0,637.5 20.0,638.3" fill="#ff2a5a" opacity="0.4" filter="url(#b4)"/>
<path d="M0 622L22 618V628L0 631Z" fill="#d8ffe8" opacity="0.85"/>
<polygon points="236.0,565.5 242.0,564.5 248.0,563.9 254.0,563.4 260.0,562.8 266.0,562.2 272.0,561.6 278.0,561.1 284.0,560.5 290.0,559.9 296.0,559.3 302.0,558.7 308.0,558.2 314.0,557.6 320.0,557.0 326.0,556.4 332.0,555.9 338.0,555.3 344.0,554.7 350.0,554.1 356.0,553.5 362.0,553.0 368.0,552.4 374.0,551.6 380.0,550.6 386.0,549.5 392.0,548.4 398.0,547.3 404.0,546.2 410.0,545.2 416.0,544.1 422.0,543.0 428.0,541.9 434.0,540.9 440.0,539.8 446.0,538.7 452.0,537.6 458.0,536.5 464.0,535.5 470.0,534.4 476.0,533.3 482.0,532.2 488.0,531.2 494.0,530.1 500.0,529.0 506.0,528.3 512.0,527.6 518.0,527.0 524.0,526.3 530.0,525.6 536.0,524.9 542.0,524.3 548.0,523.6 554.0,522.9 560.0,522.2 566.0,521.6 572.0,520.9 578.0,520.2 584.0,519.5 590.0,518.9 596.0,518.2 602.0,517.5 608.0,516.8 614.0,516.2 620.0,515.5 626.0,514.8 632.0,514.1 638.0,513.5 644.0,512.8 650.0,512.1 656.0,511.4 662.0,510.7 668.0,510.0 674.0,509.3 680.0,508.7 686.0,508.0 692.0,507.3 698.0,506.6 704.0,505.9 710.0,505.2 716.0,504.5 722.0,503.8 728.0,503.1 734.0,502.4 740.0,501.7 746.0,501.0 752.0,500.3 758.0,499.6 764.0,499.0 770.0,498.3 776.0,497.6 782.0,496.9 788.0,496.2 794.0,495.5 800.0,494.8 800.0,536.4 794.0,537.0 788.0,537.6 782.0,538.2 776.0,538.8 770.0,539.4 764.0,540.0 758.0,540.7 752.0,541.3 746.0,541.9 740.0,542.5 734.0,543.1 728.0,543.7 722.0,544.3 716.0,544.9 710.0,545.5 704.0,546.1 698.0,546.7 692.0,547.3 686.0,548.0 680.0,548.6 674.0,549.2 668.0,549.8 662.0,550.4 656.0,551.0 650.0,551.6 644.0,551.9 638.0,552.3 632.0,552.7 626.0,553.1 620.0,553.5 614.0,553.8 608.0,554.2 602.0,554.6 596.0,555.0 590.0,555.3 584.0,555.7 578.0,556.1 572.0,556.5 566.0,556.8 560.0,557.2 554.0,557.6 548.0,558.0 542.0,558.4 536.0,558.7 530.0,559.1 524.0,559.5 518.0,559.9 512.0,560.2 506.0,560.6 500.0,561.0 494.0,562.1 488.0,563.2 482.0,564.2 476.0,565.3 470.0,566.4 464.0,567.5 458.0,568.5 452.0,569.6 446.0,570.7 440.0,571.8 434.0,572.9 428.0,573.9 422.0,575.0 416.0,576.1 410.0,577.2 404.0,578.2 398.0,579.3 392.0,580.4 386.0,581.5 380.0,582.6 374.0,583.6 368.0,584.4 362.0,585.0 356.0,585.5 350.0,586.1 344.0,586.7 338.0,587.3 332.0,587.9 326.0,588.4 320.0,589.0 314.0,589.6 308.0,590.2 302.0,590.7 296.0,591.3 290.0,591.9 284.0,592.5 278.0,593.1 272.0,593.6 266.0,594.2 260.0,594.8 254.0,595.4 248.0,595.9 242.0,596.5 236.0,597.5" fill="#ff2a5a" opacity="0.6" filter="url(#b4)"/>
<polygon points="237.0,562.0 249.0,560.7 261.0,559.4 273.0,558.1 285.0,556.8 297.0,555.5 309.0,554.2 321.0,553.0 333.0,551.7 345.0,550.4 357.0,549.1 369.0,547.8 381.0,545.7 393.0,543.4 405.0,541.2 417.0,538.9 429.0,536.6 441.0,534.3 453.0,532.0 465.0,529.7 477.0,527.4 489.0,525.1 501.0,522.9 513.0,521.4 525.0,519.9 537.0,518.3 549.0,516.8 561.0,515.3 573.0,513.8 585.0,512.3 597.0,510.8 609.0,509.3 621.0,507.8 633.0,506.3 645.0,504.7 657.0,503.2 669.0,501.7 681.0,500.1 693.0,498.6 705.0,497.0 717.0,495.5 729.0,493.9 741.0,492.4 753.0,490.9 765.0,489.3 777.0,487.8 789.0,486.2 800.0,494.8 792.0,495.7 780.0,497.1 768.0,498.5 756.0,499.9 744.0,501.3 732.0,502.6 720.0,504.0 708.0,505.4 696.0,506.8 684.0,508.2 672.0,509.6 660.0,511.0 648.0,512.3 636.0,513.7 624.0,515.0 612.0,516.4 600.0,517.7 588.0,519.1 576.0,520.4 564.0,521.8 552.0,523.1 540.0,524.5 528.0,525.8 516.0,527.2 504.0,528.5 492.0,530.4 480.0,532.6 468.0,534.8 456.0,536.9 444.0,539.1 432.0,541.2 420.0,543.4 408.0,545.5 396.0,547.7 384.0,549.8 372.0,552.0 360.0,553.2 348.0,554.3 336.0,555.5 324.0,556.6 312.0,557.8 300.0,558.9 288.0,560.1 276.0,561.2 264.0,562.4 252.0,563.6 240.0,564.7" fill="#5a1a34" opacity="0.9"/>
<polyline points="237.0,561.0 249.0,559.7 261.0,558.4 273.0,557.1 285.0,555.8 297.0,554.5 309.0,553.2 321.0,552.0 333.0,550.7 345.0,549.4 357.0,548.1 369.0,546.8 381.0,544.7 393.0,542.4 405.0,540.2 417.0,537.9 429.0,535.6 441.0,533.3 453.0,531.0 465.0,528.7 477.0,526.4 489.0,524.1 501.0,521.9 513.0,520.4 525.0,518.9 537.0,517.3 549.0,515.8 561.0,514.3 573.0,512.8 585.0,511.3 597.0,509.8 609.0,508.3 621.0,506.8 633.0,505.3 645.0,503.7 657.0,502.2 669.0,500.7 681.0,499.1 693.0,497.6 705.0,496.0 717.0,494.5 729.0,492.9 741.0,491.4 753.0,489.9 765.0,488.3 777.0,486.8 789.0,485.2" fill="none" stroke="#f0d8ff" stroke-width="2.4" stroke-linecap="round" stroke-dasharray="0.1 8"/>
<polygon points="22.0,615.6 28.0,614.5 34.0,613.5 40.0,612.4 46.0,611.3 52.0,610.3 58.0,609.2 64.0,608.1 70.0,607.1 76.0,606.0 82.0,604.9 88.0,603.9 94.0,602.8 100.0,601.8 106.0,600.7 112.0,599.6 118.0,598.6 124.0,597.5 130.0,596.4 136.0,595.4 142.0,594.3 148.0,593.2 154.0,592.2 160.0,591.1 166.0,590.0 172.0,589.0 178.0,587.9 184.0,586.8 190.0,585.8 194.0,585.1 194.0,616.4 190.0,616.9 184.0,617.6 178.0,618.4 172.0,619.1 166.0,619.9 160.0,620.6 154.0,621.4 148.0,622.1 142.0,622.9 136.0,623.7 130.0,624.4 124.0,625.2 118.0,625.9 112.0,626.7 106.0,627.4 100.0,628.2 94.0,628.9 88.0,629.7 82.0,630.4 76.0,631.2 70.0,632.0 64.0,632.7 58.0,633.5 52.0,634.2 46.0,635.0 40.0,635.7 34.0,636.5 28.0,637.2 22.0,638.0" fill="url(#bandg)"/>
<polyline points="23.0,616.9 26.5,635.9 29.9,615.7 33.4,635.1 36.9,614.5 40.4,634.2 43.9,613.2 47.4,633.3 50.9,612.0 54.4,632.4 58.0,610.7 61.5,631.5 65.1,609.5 68.6,630.6 72.2,608.2 75.8,629.7 79.4,606.9 83.0,628.8 86.6,605.6 90.2,627.9 93.8,604.4 97.5,627.0 101.1,603.1 104.7,626.1 108.4,601.8 112.1,625.2 115.8,600.5 119.5,624.2 123.1,599.1 126.9,623.3 130.6,597.8 134.3,622.4 138.0,596.5 141.8,621.4 145.5,595.2 149.3,620.5 153.1,593.8 156.9,619.5 160.6,592.5 164.4,618.6 168.3,591.1 172.1,617.6 175.9,589.8 179.8,616.6 183.6,588.4 187.5,615.7 191.3,587.0" fill="none" stroke="#ff4a78" stroke-width="2.6" stroke-linejoin="round" opacity="0.9"/>
<polyline points="23.0,616.9 26.5,635.9 29.9,615.7 33.4,635.1 36.9,614.5 40.4,634.2 43.9,613.2 47.4,633.3 50.9,612.0 54.4,632.4 58.0,610.7 61.5,631.5 65.1,609.5 68.6,630.6 72.2,608.2 75.8,629.7 79.4,606.9 83.0,628.8 86.6,605.6 90.2,627.9 93.8,604.4 97.5,627.0 101.1,603.1 104.7,626.1 108.4,601.8 112.1,625.2 115.8,600.5 119.5,624.2 123.1,599.1 126.9,623.3 130.6,597.8 134.3,622.4 138.0,596.5 141.8,621.4 145.5,595.2 149.3,620.5 153.1,593.8 156.9,619.5 160.6,592.5 164.4,618.6 168.3,591.1 172.1,617.6 175.9,589.8 179.8,616.6 183.6,588.4 187.5,615.7 191.3,587.0" fill="none" stroke="#fff0f4" stroke-width="1.1" stroke-linejoin="round"/>
<polyline points="22.0,614.6 28.0,613.5 34.0,612.5 40.0,611.4 46.0,610.3 52.0,609.3 58.0,608.2 64.0,607.1 70.0,606.1 76.0,605.0 82.0,603.9 88.0,602.9 94.0,601.8 100.0,600.8 106.0,599.7 112.0,598.6 118.0,597.6 124.0,596.5 130.0,595.4 136.0,594.4 142.0,593.3 148.0,592.2 154.0,591.2 160.0,590.1 166.0,589.0 172.0,588.0 178.0,586.9 184.0,585.8 190.0,584.8 194.0,584.1" fill="none" stroke="#ffe8f0" stroke-width="2" stroke-linecap="round" stroke-dasharray="0.1 6.5"/>
<polyline points="22.0,639.0 28.0,638.2 34.0,637.5 40.0,636.7 46.0,636.0 52.0,635.2 58.0,634.5 64.0,633.7 70.0,633.0 76.0,632.2 82.0,631.4 88.0,630.7 94.0,629.9 100.0,629.2 106.0,628.4 112.0,627.7 118.0,626.9 124.0,626.2 130.0,625.4 136.0,624.7 142.0,623.9 148.0,623.1 154.0,622.4 160.0,621.6 166.0,620.9 172.0,620.1 178.0,619.4 184.0,618.6 190.0,617.9 194.0,617.4" fill="none" stroke="#1a2a2a" stroke-width="2.5"/>
<polygon points="237.0,565.0 243.0,564.4 249.0,563.8 255.0,563.3 261.0,562.7 267.0,562.1 273.0,561.5 279.0,561.0 285.0,560.4 291.0,559.8 297.0,559.2 303.0,558.6 309.0,558.1 315.0,557.5 321.0,556.9 327.0,556.3 333.0,555.8 339.0,555.2 345.0,554.6 351.0,554.0 357.0,553.4 363.0,552.9 369.0,552.3 375.0,551.5 381.0,550.4 387.0,549.3 393.0,548.2 399.0,547.1 405.0,546.1 411.0,545.0 417.0,543.9 423.0,542.8 429.0,541.8 435.0,540.7 441.0,539.6 447.0,538.5 453.0,537.4 459.0,536.4 465.0,535.3 471.0,534.2 477.0,533.1 483.0,532.1 489.0,531.0 495.0,529.9 501.0,528.9 507.0,528.2 513.0,527.5 519.0,526.9 525.0,526.2 531.0,525.5 537.0,524.8 543.0,524.2 549.0,523.5 555.0,522.8 561.0,522.1 567.0,521.5 573.0,520.8 579.0,520.1 585.0,519.4 591.0,518.8 597.0,518.1 603.0,517.4 609.0,516.7 615.0,516.1 621.0,515.4 627.0,514.7 633.0,514.0 639.0,513.4 645.0,512.7 651.0,512.0 657.0,511.3 663.0,510.6 669.0,509.9 675.0,509.2 681.0,508.5 687.0,507.8 693.0,507.2 699.0,506.5 705.0,505.8 711.0,505.1 717.0,504.4 723.0,503.7 729.0,503.0 735.0,502.3 741.0,501.6 747.0,500.9 753.0,500.2 759.0,499.5 765.0,498.8 771.0,498.1 777.0,497.5 783.0,496.8 789.0,496.1 795.0,495.4 801.0,494.7 807.0,494.0 812.0,493.4 812.0,535.2 807.0,535.7 801.0,536.3 795.0,536.9 789.0,537.5 783.0,538.1 777.0,538.7 771.0,539.3 765.0,539.9 759.0,540.6 753.0,541.2 747.0,541.8 741.0,542.4 735.0,543.0 729.0,543.6 723.0,544.2 717.0,544.8 711.0,545.4 705.0,546.0 699.0,546.6 693.0,547.2 687.0,547.9 681.0,548.5 675.0,549.1 669.0,549.7 663.0,550.3 657.0,550.9 651.0,551.5 645.0,551.9 639.0,552.3 633.0,552.6 627.0,553.0 621.0,553.4 615.0,553.8 609.0,554.1 603.0,554.5 597.0,554.9 591.0,555.3 585.0,555.7 579.0,556.0 573.0,556.4 567.0,556.8 561.0,557.2 555.0,557.5 549.0,557.9 543.0,558.3 537.0,558.7 531.0,559.0 525.0,559.4 519.0,559.8 513.0,560.2 507.0,560.6 501.0,560.9 495.0,561.9 489.0,563.0 483.0,564.1 477.0,565.1 471.0,566.2 465.0,567.3 459.0,568.4 453.0,569.4 447.0,570.5 441.0,571.6 435.0,572.7 429.0,573.8 423.0,574.8 417.0,575.9 411.0,577.0 405.0,578.1 399.0,579.1 393.0,580.2 387.0,581.3 381.0,582.4 375.0,583.5 369.0,584.3 363.0,584.9 357.0,585.4 351.0,586.0 345.0,586.6 339.0,587.2 333.0,587.8 327.0,588.3 321.0,588.9 315.0,589.5 309.0,590.1 303.0,590.6 297.0,591.2 291.0,591.8 285.0,592.4 279.0,593.0 273.0,593.5 267.0,594.1 261.0,594.7 255.0,595.3 249.0,595.8 243.0,596.4 237.0,597.0" fill="url(#bandg)"/>
<polyline points="238.0,566.4 244.6,594.8 251.3,565.1 258.0,593.5 264.8,563.8 271.6,592.2 278.5,562.5 285.5,590.8 292.5,561.2 299.6,589.5 306.8,559.8 314.0,588.1 321.3,558.4 328.7,586.7 336.1,557.0 343.5,585.2 351.1,555.5 358.7,583.8 366.4,554.0 374.1,582.1 382.0,551.7 389.9,579.3 397.9,548.9 405.9,576.4 414.1,545.9 422.3,573.5 430.7,543.0 439.1,570.4 447.6,539.9 456.2,567.4 464.9,536.8 473.7,564.2 482.5,533.6 491.5,561.0 500.6,530.4 509.7,558.9 519.0,528.4 528.3,557.7 537.8,526.2 547.4,556.5 557.0,524.1 566.8,555.3 576.6,521.9 586.6,554.1 596.7,519.6 606.9,552.8 617.3,517.3 627.8,551.5 638.4,514.9 649.2,550.1 660.2,512.4 671.3,547.9 682.5,509.9 693.9,545.7 705.5,507.2 717.2,543.3 729.0,504.5 741.1,540.9 753.3,501.7 765.6,538.4 778.2,498.8 790.9,535.8 803.7,495.9" fill="none" stroke="#ff4a78" stroke-width="6" stroke-linejoin="round" opacity="0.9"/>
<polyline points="238.0,566.4 244.6,594.8 251.3,565.1 258.0,593.5 264.8,563.8 271.6,592.2 278.5,562.5 285.5,590.8 292.5,561.2 299.6,589.5 306.8,559.8 314.0,588.1 321.3,558.4 328.7,586.7 336.1,557.0 343.5,585.2 351.1,555.5 358.7,583.8 366.4,554.0 374.1,582.1 382.0,551.7 389.9,579.3 397.9,548.9 405.9,576.4 414.1,545.9 422.3,573.5 430.7,543.0 439.1,570.4 447.6,539.9 456.2,567.4 464.9,536.8 473.7,564.2 482.5,533.6 491.5,561.0 500.6,530.4 509.7,558.9 519.0,528.4 528.3,557.7 537.8,526.2 547.4,556.5 557.0,524.1 566.8,555.3 576.6,521.9 586.6,554.1 596.7,519.6 606.9,552.8 617.3,517.3 627.8,551.5 638.4,514.9 649.2,550.1 660.2,512.4 671.3,547.9 682.5,509.9 693.9,545.7 705.5,507.2 717.2,543.3 729.0,504.5 741.1,540.9 753.3,501.7 765.6,538.4 778.2,498.8 790.9,535.8 803.7,495.9" fill="none" stroke="#fff0f4" stroke-width="2.8" stroke-linejoin="round"/>
<polyline points="237.0,564.0 243.0,563.4 249.0,562.8 255.0,562.3 261.0,561.7 267.0,561.1 273.0,560.5 279.0,560.0 285.0,559.4 291.0,558.8 297.0,558.2 303.0,557.6 309.0,557.1 315.0,556.5 321.0,555.9 327.0,555.3 333.0,554.8 339.0,554.2 345.0,553.6 351.0,553.0 357.0,552.4 363.0,551.9 369.0,551.3 375.0,550.5 381.0,549.4 387.0,548.3 393.0,547.2 399.0,546.1 405.0,545.1 411.0,544.0 417.0,542.9 423.0,541.8 429.0,540.8 435.0,539.7 441.0,538.6 447.0,537.5 453.0,536.4 459.0,535.4 465.0,534.3 471.0,533.2 477.0,532.1 483.0,531.1 489.0,530.0 495.0,528.9 501.0,527.9 507.0,527.2 513.0,526.5 519.0,525.9 525.0,525.2 531.0,524.5 537.0,523.8 543.0,523.2 549.0,522.5 555.0,521.8 561.0,521.1 567.0,520.5 573.0,519.8 579.0,519.1 585.0,518.4 591.0,517.8 597.0,517.1 603.0,516.4 609.0,515.7 615.0,515.1 621.0,514.4 627.0,513.7 633.0,513.0 639.0,512.4 645.0,511.7 651.0,511.0 657.0,510.3 663.0,509.6 669.0,508.9 675.0,508.2 681.0,507.5 687.0,506.8 693.0,506.2 699.0,505.5 705.0,504.8 711.0,504.1 717.0,503.4 723.0,502.7 729.0,502.0 735.0,501.3 741.0,500.6 747.0,499.9 753.0,499.2 759.0,498.5 765.0,497.8 771.0,497.1 777.0,496.5 783.0,495.8 789.0,495.1 795.0,494.4 801.0,493.7 807.0,493.0 812.0,492.4" fill="none" stroke="#ffe8f0" stroke-width="2" stroke-linecap="round" stroke-dasharray="0.1 6.5"/>
<polyline points="237.0,598.0 243.0,597.4 249.0,596.8 255.0,596.3 261.0,595.7 267.0,595.1 273.0,594.5 279.0,594.0 285.0,593.4 291.0,592.8 297.0,592.2 303.0,591.6 309.0,591.1 315.0,590.5 321.0,589.9 327.0,589.3 333.0,588.8 339.0,588.2 345.0,587.6 351.0,587.0 357.0,586.4 363.0,585.9 369.0,585.3 375.0,584.5 381.0,583.4 387.0,582.3 393.0,581.2 399.0,580.1 405.0,579.1 411.0,578.0 417.0,576.9 423.0,575.8 429.0,574.8 435.0,573.7 441.0,572.6 447.0,571.5 453.0,570.4 459.0,569.4 465.0,568.3 471.0,567.2 477.0,566.1 483.0,565.1 489.0,564.0 495.0,562.9 501.0,561.9 507.0,561.6 513.0,561.2 519.0,560.8 525.0,560.4 531.0,560.0 537.0,559.7 543.0,559.3 549.0,558.9 555.0,558.5 561.0,558.2 567.0,557.8 573.0,557.4 579.0,557.0 585.0,556.7 591.0,556.3 597.0,555.9 603.0,555.5 609.0,555.1 615.0,554.8 621.0,554.4 627.0,554.0 633.0,553.6 639.0,553.3 645.0,552.9 651.0,552.5 657.0,551.9 663.0,551.3 669.0,550.7 675.0,550.1 681.0,549.5 687.0,548.9 693.0,548.2 699.0,547.6 705.0,547.0 711.0,546.4 717.0,545.8 723.0,545.2 729.0,544.6 735.0,544.0 741.0,543.4 747.0,542.8 753.0,542.2 759.0,541.6 765.0,540.9 771.0,540.3 777.0,539.7 783.0,539.1 789.0,538.5 795.0,537.9 801.0,537.3 807.0,536.7 812.0,536.2" fill="none" stroke="#1a2a2a" stroke-width="2.5"/>
<polyline points="460.0,573.2 480.0,569.6 500.0,566.0 520.0,564.7 540.0,563.5 560.0,562.2 580.0,561.0 600.0,559.7 620.0,558.5 640.0,557.2 660.0,555.6 680.0,553.6 700.0,551.5 720.0,549.5 740.0,547.5 760.0,545.5 780.0,543.4 800.0,541.4" fill="none" stroke="#7fd8d0" stroke-width="1.2" opacity="0.7"/>
<circle cx="516" cy="578" r="3.6" fill="#ff2020" filter="url(#b1)"/>
<circle cx="441" cy="574" r="3.6" fill="#ff2020" filter="url(#b1)"/>
<circle cx="380" cy="578" r="3.6" fill="#ff2020" filter="url(#b1)"/>
<g>
<rect x="196" y="575" width="134" height="108" fill="#9fffd0" opacity="0.4" filter="url(#b8)"/>
<path d="M205.4 578h13.3l2 88h-28z" fill="#8a78d8"/>
<path d="M204.9 581H218.8M204.5 584H218.8M204.1 587H218.9M203.6 590H219.0M203.2 593H219.0M202.8 596H219.1M202.3 599H219.2M201.9 602H219.3M201.5 605H219.3M201.1 608H219.4M200.6 611H219.5M200.2 614H219.5M199.8 617H219.6M199.3 620H219.7M198.9 623H219.7M198.5 626H219.8M198.0 629H219.9M197.6 632H219.9M197.2 635H220.0M196.7 638H220.1M196.3 641H220.1M195.9 644H220.2M195.4 647H220.3M195.0 650H220.4M194.6 653H220.4M194.1 656H220.5M193.7 659H220.6M193.3 662H220.6M192.8 665H220.7" stroke="#f4f0ff" stroke-width="1.9" fill="none"/>
<rect x="193" y="666" width="30" height="14" fill="#2a2050"/>
<rect x="218" y="565.4" width="19" height="36" fill="#f8eef0"/><rect x="218.6" y="566" width="17.8" height="7.5" fill="#d83a55"/><rect x="220" y="580" width="15" height="3" fill="#e890a0"/>
<path d="M221.4 600.8H256V681H219.5Z" fill="#e2faee"/><path d="M293.6 603H327L328.5 676H293.6Z" fill="#e2faee"/>
<rect x="256" y="602" width="37.6" height="79" fill="#0e4431"/>
<rect x="257" y="633" width="19" height="19" fill="#bfead6"/><rect x="258" y="616" width="9" height="14" fill="#08261c"/><rect x="277" y="606" width="15" height="70" fill="#15573f"/>
<path d="M220 652H257M220 663H257M220 673H257M221 618h9M221 629h9M221 640h9M293.6 648H328M293.6 658H328M293.6 667H328M318 616h10M318 627h10M318 638h10M236 606v22M241 606v22M302 608v22M307 608v22" stroke="#1d6e50" stroke-width="2.1" fill="none"/>
<rect x="221" y="600" width="107" height="5" fill="#f6fffa"/>
<circle cx="263" cy="607.5" r="11" fill="#fff" filter="url(#b2)"/><circle cx="263" cy="607.5" r="5" fill="#fff"/><circle cx="228" cy="604" r="6" fill="#fff" filter="url(#b2)"/><circle cx="316" cy="672" r="3" fill="#ffd070" filter="url(#b1)"/>
<rect x="214" y="680" width="120" height="7" fill="#1f5e48"/>
</g>
<rect x="0" y="682" width="800" height="12" fill="#081410"/>
<rect x="130" y="678" width="270" height="14" fill="#0c2a22"/>
<rect x="330" y="672" width="210" height="20" fill="#0a1c1a"/>
<circle cx="573.6" cy="670.2" r="2.0" fill="#80ffb0"/>
<circle cx="527.7" cy="671.1" r="1.9" fill="#b8ff90"/>
<circle cx="475.6" cy="677.7" r="1.4" fill="#b8ff90"/>
<circle cx="746.6" cy="676.5" r="1.3" fill="#e0ffa0"/>
<circle cx="794.8" cy="675.7" r="1.7" fill="#b8ff90"/>
<circle cx="493.9" cy="674.5" r="1.2" fill="#80ffb0"/>
<circle cx="447.9" cy="671.7" r="1.0" fill="#ffffff"/>
<circle cx="656.6" cy="672.9" r="1.5" fill="#e0ffa0"/>
<circle cx="638.2" cy="681.2" r="1.1" fill="#ffffff"/>
<circle cx="633.9" cy="679.3" r="1.1" fill="#ffffff"/>
<circle cx="637.3" cy="677.6" r="1.8" fill="#80ffb0"/>
<circle cx="779.4" cy="676.6" r="1.9" fill="#b8ff90"/>
<circle cx="603.0" cy="676.0" r="1.9" fill="#fff080"/>
<circle cx="414.9" cy="675.6" r="1.9" fill="#ffd040"/>
<circle cx="711.6" cy="670.8" r="1.1" fill="#fff080"/>
<circle cx="793.6" cy="673.7" r="1.3" fill="#ffd040"/>
<circle cx="447.7" cy="681.9" r="1.1" fill="#e0ffa0"/>
<circle cx="514.9" cy="681.4" r="1.3" fill="#ffffff"/>
<circle cx="665.0" cy="678.6" r="0.9" fill="#fff080"/>
<circle cx="678.3" cy="676.1" r="1.8" fill="#80ffb0"/>
<circle cx="780.6" cy="674.6" r="1.7" fill="#ffd040"/>
<circle cx="599.1" cy="668.1" r="1.4" fill="#fff080"/>
<circle cx="513.3" cy="671.7" r="1.5" fill="#ffffff"/>
<circle cx="531.6" cy="670.4" r="1.4" fill="#b8ff90"/>
<circle cx="410.6" cy="672.3" r="1.1" fill="#ffd040"/>
<circle cx="713.5" cy="678.1" r="1.1" fill="#fff080"/>
<circle cx="431.9" cy="668.4" r="1.2" fill="#b8ff90"/>
<circle cx="647.4" cy="671.6" r="1.5" fill="#ffd040"/>
<circle cx="644.3" cy="672.8" r="1.1" fill="#e0ffa0"/>
<circle cx="705.0" cy="676.1" r="0.9" fill="#80ffb0"/>
<circle cx="486.3" cy="680.9" r="1.6" fill="#b8ff90"/>
<circle cx="588.1" cy="670.9" r="1.5" fill="#ffd040"/>
<circle cx="728.7" cy="672.3" r="1.2" fill="#ffd040"/>
<circle cx="734.5" cy="677.6" r="0.9" fill="#e0ffa0"/>
<circle cx="740.3" cy="668.2" r="1.5" fill="#ffd040"/>
<circle cx="629.2" cy="668.1" r="1.2" fill="#fff080"/>
<circle cx="671.6" cy="669.2" r="1.4" fill="#ffd040"/>
<circle cx="709.1" cy="677.8" r="1.8" fill="#80ffb0"/>
<circle cx="559.8" cy="681.3" r="1.3" fill="#b8ff90"/>
<circle cx="412.7" cy="674.6" r="0.9" fill="#80ffb0"/>
<circle cx="758.0" cy="671.7" r="1.3" fill="#ffffff"/>
<circle cx="633.6" cy="676.1" r="1.4" fill="#ffffff"/>
<circle cx="435.9" cy="679.0" r="2.0" fill="#ffffff"/>
<circle cx="487.5" cy="675.1" r="1.6" fill="#e0ffa0"/>
<circle cx="691.4" cy="681.0" r="1.1" fill="#b8ff90"/>
<circle cx="775.8" cy="680.0" r="1.1" fill="#ffffff"/>
<circle cx="583.1" cy="680.0" r="1.6" fill="#e0ffa0"/>
<circle cx="664.8" cy="676.0" r="1.8" fill="#ffd040"/>
<circle cx="462.6" cy="681.5" r="1.5" fill="#80ffb0"/>
<circle cx="522.5" cy="680.8" r="1.9" fill="#ffffff"/>
<circle cx="486.2" cy="677.7" r="2.0" fill="#fff080"/>
<circle cx="567.1" cy="680.9" r="1.7" fill="#80ffb0"/>
<circle cx="430.0" cy="678.4" r="1.2" fill="#fff080"/>
<circle cx="744.8" cy="672.2" r="1.9" fill="#80ffb0"/>
<circle cx="613.9" cy="680.9" r="2.0" fill="#e0ffa0"/>
<circle cx="542.5" cy="673.5" r="1.7" fill="#ffd040"/>
<circle cx="715.9" cy="671.7" r="1.8" fill="#e0ffa0"/>
<circle cx="637.0" cy="672.7" r="1.7" fill="#b8ff90"/>
<circle cx="455.5" cy="668.5" r="1.0" fill="#e0ffa0"/>
<circle cx="526.8" cy="672.5" r="1.1" fill="#fff080"/>
<circle cx="613.1" cy="675.5" r="2.0" fill="#e0ffa0"/>
<circle cx="727.0" cy="680.3" r="0.9" fill="#80ffb0"/>
<circle cx="558.6" cy="669.9" r="1.2" fill="#ffffff"/>
<circle cx="774.9" cy="680.8" r="1.9" fill="#ffffff"/>
<circle cx="747.4" cy="680.6" r="1.7" fill="#e0ffa0"/>
<circle cx="467.5" cy="677.1" r="2.0" fill="#ffd040"/>
<circle cx="789.4" cy="674.2" r="1.7" fill="#ffffff"/>
<circle cx="576.5" cy="672.8" r="1.2" fill="#b8ff90"/>
<circle cx="749.6" cy="672.9" r="1.8" fill="#ffd040"/>
<circle cx="629.2" cy="676.9" r="1.3" fill="#e0ffa0"/>
<circle cx="654.4" cy="674.6" r="1.2" fill="#fff080"/>
<circle cx="666.1" cy="677.4" r="1.8" fill="#b8ff90"/>
<circle cx="520.3" cy="669.7" r="1.9" fill="#b8ff90"/>
<circle cx="509.9" cy="674.6" r="1.0" fill="#80ffb0"/>
<circle cx="477.3" cy="674.9" r="1.0" fill="#ffffff"/>
<circle cx="744.3" cy="674.1" r="1.8" fill="#fff080"/>
<circle cx="794.7" cy="676.4" r="1.8" fill="#b8ff90"/>
<circle cx="413.4" cy="672.2" r="1.6" fill="#fff080"/>
<circle cx="596.9" cy="677.6" r="1.4" fill="#e0ffa0"/>
<circle cx="433.9" cy="675.7" r="1.2" fill="#ffffff"/>
<circle cx="621.4" cy="672.5" r="1.2" fill="#80ffb0"/>
<circle cx="764.0" cy="675.2" r="1.2" fill="#ffffff"/>
<circle cx="540.2" cy="673.4" r="1.3" fill="#b8ff90"/>
<circle cx="709.3" cy="673.3" r="1.2" fill="#fff080"/>
<circle cx="778.0" cy="673.3" r="1.3" fill="#ffffff"/>
<circle cx="627.5" cy="677.5" r="1.9" fill="#80ffb0"/>
<circle cx="443.3" cy="672.4" r="1.4" fill="#ffffff"/>
<circle cx="522.9" cy="680.3" r="1.5" fill="#e0ffa0"/>
<circle cx="499.2" cy="675.4" r="1.0" fill="#80ffb0"/>
<circle cx="544.6" cy="670.2" r="1.9" fill="#ffffff"/>
<circle cx="727.3" cy="680.3" r="1.8" fill="#ffd040"/>
<circle cx="457.8" cy="678.8" r="1.6" fill="#fff080"/>
<circle cx="516.8" cy="671.0" r="0.9" fill="#fff080"/>
<circle cx="522.8" cy="681.6" r="1.1" fill="#ffffff"/>
<circle cx="511.1" cy="679.9" r="1.3" fill="#e0ffa0"/>
<circle cx="527.9" cy="680.4" r="1.1" fill="#ffffff"/>
<circle cx="545.1" cy="672.9" r="1.6" fill="#ffffff"/>
<circle cx="597.4" cy="681.3" r="1.1" fill="#ffffff"/>
<circle cx="798.6" cy="670.6" r="1.0" fill="#ffffff"/>
<circle cx="549.7" cy="674.8" r="1.4" fill="#e0ffa0"/>
<circle cx="717.0" cy="673.6" r="1.7" fill="#e0ffa0"/>
<circle cx="435.2" cy="681.7" r="1.9" fill="#ffffff"/>
<circle cx="525.8" cy="681.7" r="2.0" fill="#80ffb0"/>
<circle cx="632.8" cy="668.8" r="1.5" fill="#fff080"/>
<circle cx="771.0" cy="680.5" r="1.7" fill="#b8ff90"/>
<circle cx="426.0" cy="674.9" r="1.6" fill="#e0ffa0"/>
<circle cx="473.9" cy="677.1" r="1.5" fill="#80ffb0"/>
<circle cx="534.3" cy="674.3" r="1.5" fill="#fff080"/>
<circle cx="494.6" cy="680.0" r="1.2" fill="#e0ffa0"/>
<circle cx="554.4" cy="675.0" r="1.5" fill="#b8ff90"/>
<circle cx="736.7" cy="670.2" r="1.2" fill="#b8ff90"/>
<circle cx="632.1" cy="677.7" r="1.4" fill="#ffffff"/>
<circle cx="505.5" cy="670.4" r="1.2" fill="#b8ff90"/>
<circle cx="576.8" cy="669.8" r="1.1" fill="#80ffb0"/>
<circle cx="658.2" cy="674.9" r="1.3" fill="#ffffff"/>
<circle cx="765.8" cy="669.4" r="1.6" fill="#fff080"/>
<circle cx="493.7" cy="675.2" r="1.3" fill="#80ffb0"/>
<circle cx="494.2" cy="668.5" r="1.1" fill="#ffffff"/>
<circle cx="648.0" cy="678.3" r="1.4" fill="#ffffff"/>
<circle cx="752.2" cy="676.3" r="1.5" fill="#fff080"/>
<circle cx="655.4" cy="679.6" r="1.1" fill="#fff080"/>
<circle cx="665.2" cy="672.7" r="1.4" fill="#ffffff"/>
<circle cx="497.2" cy="675.6" r="1.2" fill="#b8ff90"/>
<circle cx="656.5" cy="672.8" r="1.9" fill="#80ffb0"/>
<circle cx="722.3" cy="676.6" r="1.1" fill="#e0ffa0"/>
<circle cx="551.0" cy="681.1" r="1.8" fill="#e0ffa0"/>
<circle cx="472.2" cy="680.4" r="1.5" fill="#ffd040"/>
<circle cx="583.3" cy="668.6" r="1.5" fill="#80ffb0"/>
<circle cx="789.9" cy="668.5" r="1.1" fill="#fff080"/>
<circle cx="795.0" cy="670.1" r="1.8" fill="#e0ffa0"/>
<circle cx="761.5" cy="680.7" r="1.8" fill="#ffd040"/>
<circle cx="599.7" cy="671.4" r="0.9" fill="#80ffb0"/>
<circle cx="793.6" cy="670.8" r="1.7" fill="#b8ff90"/>
<circle cx="485.8" cy="670.7" r="1.4" fill="#fff080"/>
<circle cx="466.5" cy="675.9" r="1.5" fill="#ffffff"/>
<circle cx="423.4" cy="674.3" r="1.8" fill="#fff080"/>
<circle cx="593.5" cy="670.3" r="1.5" fill="#e0ffa0"/>
<circle cx="431.6" cy="677.7" r="1.2" fill="#e0ffa0"/>
<circle cx="686.7" cy="673.0" r="1.6" fill="#80ffb0"/>
<circle cx="798.9" cy="679.4" r="1.1" fill="#ffd040"/>
<circle cx="664.4" cy="671.6" r="1.0" fill="#80ffb0"/>
<circle cx="705.7" cy="678.8" r="1.4" fill="#ffd040"/>
<circle cx="612.1" cy="680.3" r="1.0" fill="#ffd040"/>
<circle cx="738.7" cy="669.8" r="1.0" fill="#ffd040"/>
<circle cx="620.4" cy="681.3" r="1.7" fill="#b8ff90"/>
<circle cx="792.5" cy="670.4" r="1.3" fill="#80ffb0"/>
<circle cx="755.1" cy="677.6" r="1.6" fill="#ffffff"/>
<circle cx="434.8" cy="679.1" r="2.0" fill="#fff080"/>
<circle cx="487.9" cy="675.1" r="1.2" fill="#fff080"/>
<circle cx="401.9" cy="669.0" r="1.2" fill="#e0ffa0"/>
<rect x="560" y="672" width="240" height="7" fill="#b0ff80" opacity="0.35" filter="url(#b2)"/>
<defs>
<linearGradient id="wbase" x1="0" y1="0" x2="1" y2="0"><stop offset="0" stop-color="#08120f"/><stop offset="0.22" stop-color="#081210"/><stop offset="0.3" stop-color="#0a2a22"/><stop offset="0.6" stop-color="#1a1238"/><stop offset="1" stop-color="#2a1248"/></linearGradient>
<linearGradient id="wfade" x1="0" y1="0" x2="0" y2="1"><stop offset="0" stop-color="#000" stop-opacity="0"/><stop offset="0.55" stop-color="#05080f" stop-opacity="0.15"/><stop offset="1" stop-color="#070a18" stop-opacity="0.72"/></linearGradient>
<linearGradient id="sf" x1="0" y1="0" x2="0" y2="1"><stop offset="0" stop-color="#fff" stop-opacity="0.9"/><stop offset="0.02" stop-color="#fff" stop-opacity="0.9"/><stop offset="0.032" stop-color="#fff" stop-opacity="0.22"/><stop offset="0.06" stop-color="#fff" stop-opacity="0.5"/><stop offset="0.115" stop-color="#fff" stop-opacity="0.92"/><stop offset="0.2" stop-color="#fff" stop-opacity="0.6"/><stop offset="0.6" stop-color="#fff" stop-opacity="0.28"/><stop offset="1" stop-color="#fff" stop-opacity="0.08"/></linearGradient>
<mask id="sm"><rect x="0" y="690" width="800" height="433" fill="url(#sf)"/></mask>
</defs>
<rect x="0" y="690" width="800" height="433" fill="url(#wbase)"/>
<g mask="url(#sm)" filter="url(#bw)">
<rect x="196" y="694" width="26" height="440" fill="#0c5a3c" opacity="0.8"/>
<rect x="223" y="694" width="33" height="440" fill="#1f9a66" opacity="0.95"/>
<rect x="258" y="694" width="13" height="440" fill="#f4fffa" opacity="1"/>
<rect x="274" y="694" width="22" height="440" fill="#2fa070" opacity="0.8"/>
<rect x="296" y="694" width="28" height="440" fill="#9a2070" opacity="0.85"/>
<rect x="326" y="694" width="40" height="440" fill="#2a9468" opacity="0.8"/>
<rect x="340" y="694" width="26" height="440" fill="#7a2078" opacity="0.5"/>
<rect x="371" y="694" width="30" height="440" fill="#f6fffb" opacity="1"/>
<rect x="404" y="694" width="8" height="440" fill="#40b080" opacity="0.8"/>
<rect x="412" y="694" width="20" height="440" fill="#b02a7c" opacity="0.85"/>
<rect x="437" y="694" width="34" height="440" fill="#f6fffb" opacity="1"/>
<rect x="476" y="694" width="26" height="440" fill="#c42e82" opacity="0.9"/>
<rect x="504" y="694" width="16" height="440" fill="#4a1c72" opacity="0.85"/>
<rect x="522" y="694" width="34" height="440" fill="#d03888" opacity="0.9"/>
<rect x="558" y="694" width="16" height="440" fill="#50207a" opacity="0.8"/>
<rect x="576" y="694" width="36" height="440" fill="#c83084" opacity="0.9"/>
<rect x="614" y="694" width="20" height="440" fill="#582480" opacity="0.8"/>
<rect x="636" y="694" width="32" height="440" fill="#d23a8c" opacity="0.9"/>
<rect x="670" y="694" width="20" height="440" fill="#4e1e76" opacity="0.8"/>
<rect x="692" y="694" width="32" height="440" fill="#c43488" opacity="0.9"/>
<rect x="726" y="694" width="18" height="440" fill="#5a2684" opacity="0.85"/>
<rect x="746" y="694" width="30" height="440" fill="#b83290" opacity="0.9"/>
<rect x="778" y="694" width="22" height="440" fill="#521e78" opacity="0.85"/>
</g>
<rect x="0" y="692.5" width="195" height="4" fill="#7a1838" opacity="0.55" filter="url(#b1)"/>
<rect x="195" y="692.5" width="605" height="5.5" fill="#d02a78" opacity="0.85" filter="url(#b1)"/>
<rect x="368" y="691" width="106" height="7" fill="#e8fff4" opacity="0.8" filter="url(#b1)"/><rect x="222" y="691" width="50" height="6" fill="#c8ffe4" opacity="0.7" filter="url(#b1)"/>
<path d="M411 704h104M677 707h122M564 710h175M382 713h235M396 716h106M298 719h66M415 722h228M559 725h122M337 728h205M607 731h116M310 734h107M602 737h146M531 740h182M596 743h157M193 746h179" stroke="#0a0820" stroke-width="1.2" opacity="0.35" fill="none"/>
<rect x="0" y="690" width="800" height="433" fill="url(#wfade)"/>
<defs><linearGradient id="bg1" gradientUnits="userSpaceOnUse" x1="0" y1="990" x2="0" y2="1066"><stop offset="0" stop-color="#fff" stop-opacity="0"/><stop offset="1" stop-color="#fff"/></linearGradient><mask id="bm"><rect x="-20" y="980" width="840" height="160" fill="url(#bg1)"/></mask></defs>
<g mask="url(#bm)"><g filter="url(#bw2)"><rect x="186" y="985" width="112" height="160" fill="#17694a" opacity="0.85"/><rect x="232" y="985" width="56" height="160" fill="#258a62" opacity="0.75"/><rect x="352" y="985" width="146" height="160" fill="#1d7452" opacity="0.85"/><rect x="370" y="985" width="90" height="160" fill="#2f9a6e" opacity="0.7"/><rect x="500" y="985" width="300" height="160" fill="#0e1028" opacity="0.9"/><rect x="0" y="985" width="175" height="160" fill="#090d12" opacity="0.95"/></g></g>
<rect x="738" y="720" width="70" height="200" fill="#6a1c78" opacity="0.5" filter="url(#b8)"/>
</svg>
<svg class="abs" style="left:0;top:0" width="800" height="320" viewBox="0 0 800 320">
<path d="M373.9 169.8 L682.7 170.3 L680.2 181.6 L676.5 185.8 L664.7 189.2 L659.1 185.8 L655.0 184.4 L648.8 187.9 L643.6 190.2 L642.2 185.8 L637.3 184.7 L635.9 180.0 L632.5 178.9 L629.4 177.2 L632.5 183.3 L628.9 186.1 L622.0 185.2 L617.6 189.4 L618.0 199.6 L619.8 209.3 L623.1 221.5 L620.1 229.8 L615.9 235.9 L610.0 234.0 L604.0 242.9 L600.4 240.6 L606.2 235.1 L602.6 237.0 L598.2 242.6 L594.3 240.5 L593.3 226.0 L591.5 226.0 L591.0 231.5 L581.6 230.1 L576.3 226.0 L573.3 219.7 L578.1 210.7 L573.9 206.3 L569.8 210.7 L564.9 206.6 L560.8 213.5 L567.7 221.8 L556.6 226.0 L549.7 231.2 L544.2 232.9 L542.8 239.8 L537.2 240.5 L540.1 232.4 L541.4 241.8 L536.3 248.1 L530.7 251.9 L532.5 264.5 L525.0 270.8 L521.5 250.6 L522.1 240.1 L518.9 245.6 L514.7 240.6 L513.0 250.6 L515.5 272.1 L507.4 276.1 L508.9 269.5 L504.8 263.2 L497.5 264.5 L496.3 270.5 L491.2 272.1 L492.2 278.6 L484.9 284.9 L485.9 278.4 L482.9 269.5 L480.9 253.2 L479.1 235.5 L485.9 216.9 L482.8 215.1 L474.0 233.8 L467.3 235.5 L467.3 228.0 L472.8 210.6 L469.3 209.1 L460.8 225.7 L451.9 230.7 L450.7 237.0 L438.3 235.5 L440.9 226.7 L448.4 200.5 L440.6 197.5 L435.6 220.4 L430.0 228.0 L428.3 235.5 L416.9 229.5 L391.5 226.5 L389.7 235.5 L390.5 241.8 L386.7 248.4 L397.8 250.6 L398.5 264.5 L396.8 274.6 L390.2 283.4 L377.6 289.1 L382.2 296.0 L382.2 298.8 L373.6 298.8 L372.6 290.9 L367.6 285.9 L366.9 265.8 L367.6 238.7 L385.2 238.0 L385.9 230.5 L371.6 228.0 L372.3 224.2 L386.2 219.2 L383.3 213.5 L385.2 205.6 L397.8 202.8 L399.3 198.0 L395.9 193.3 L394.6 182.0 L387.1 179.5 L378.9 175.7 Z" fill="#94a6b4"/>
<path d="M535.8 240.9 L545.5 237.3 L549.7 233.2 L564.9 227.6 L574.6 237.3 L580.5 248.4 L588.8 267.8 L591.5 274.7 L587.4 280.3 L581.8 280.3 L577.7 272.0 L572.7 270.6 L567.7 265.0 L560.8 253.7 L553.9 248.1 L545.5 242.6 L538.6 245.4 Z" fill="#94a6b4"/>
<path d="M391.0 235.5 L428.0 245.6 L448.2 258.2 L446.9 260.7 L426.8 249.4 L390.2 240.6 Z" fill="#94a6b4"/>
<path d="M440.6 245.6 L458.2 239.3 L459.5 241.8 L443.1 248.1 Z" fill="#94a6b4"/>
<path d="M458.2 262.0 L477.1 265.8 L476.9 268.3 L458.0 264.7 Z" fill="#94a6b4"/>
<path d="M470.8 245.6 L477.1 243.1 L477.8 253.2 L473.4 251.9 Z" fill="#94a6b4"/>
<path d="M635.6 198.3 C640.4 198.3 656.4 197.8 664.7 198.3 C673.0 198.7 678.5 199.4 685.5 201.0 C692.4 202.6 699.3 204.7 706.3 207.9 C713.2 211.2 721.7 216.0 727.0 220.4 C732.3 224.8 735.7 229.7 738.1 234.3 C740.5 238.9 741.3 243.5 741.6 248.1 C741.8 252.7 741.2 257.6 739.5 262.0 C737.8 266.4 735.6 270.5 731.2 274.4 C726.8 278.4 720.8 282.6 713.2 285.5 C705.6 288.4 695.9 290.6 685.5 291.8 C675.1 292.9 661.2 292.6 650.8 292.5 C640.4 292.3 631.2 291.9 623.1 291.1 C615.0 290.3 609.3 288.8 602.3 287.6 C595.4 286.5 588.0 285.5 581.6 284.1 C575.1 282.8 566.6 280.1 563.6 279.3" fill="none" stroke="#e9722c" stroke-width="1.9" stroke-dasharray="4.6 3.6"/>
<path d="M568.4 224.9 C570.6 226.9 577.1 233.2 581.6 237.0 C586.1 240.9 591.8 244.2 595.4 248.1 C599.0 252.1 601.1 256.8 603.0 260.6 C605.0 264.4 606.9 267.9 607.2 271.0 C607.5 274.1 606.3 276.9 604.8 279.3 C603.3 281.7 600.9 284.0 598.2 285.3 C595.5 286.5 590.1 286.6 588.5 286.9" fill="none" stroke="#e9722c" stroke-width="1.9" stroke-dasharray="4.6 3.6"/>
<g transform="translate(670.5 184.4)"><circle r="7.7" fill="#f0651a"/><path d="M0 5.6C-1.8 3.2 -4.3 1.5 -4.3 -0.9A4.3 4.3 0 1 1 4.3 -0.9C4.3 1.5 1.8 3.2 0 5.6Z" fill="#fff"/><circle cy="-0.9" r="2.1" fill="#f0651a"/></g>
<g transform="translate(628.9 196.9)"><circle r="7.7" fill="#f0651a"/><path d="M0 5.6C-1.8 3.2 -4.3 1.5 -4.3 -0.9A4.3 4.3 0 1 1 4.3 -0.9C4.3 1.5 1.8 3.2 0 5.6Z" fill="#fff"/><circle cy="-0.9" r="2.1" fill="#f0651a"/></g>
<g transform="translate(559.4 216.3)"><circle r="7.7" fill="#f0651a"/><path d="M0 5.6C-1.8 3.2 -4.3 1.5 -4.3 -0.9A4.3 4.3 0 1 1 4.3 -0.9C4.3 1.5 1.8 3.2 0 5.6Z" fill="#fff"/><circle cy="-0.9" r="2.1" fill="#f0651a"/></g>
<g transform="translate(628.9 242.1)"><circle r="7.7" fill="#f0651a"/><path d="M0 5.6C-1.8 3.2 -4.3 1.5 -4.3 -0.9A4.3 4.3 0 1 1 4.3 -0.9C4.3 1.5 1.8 3.2 0 5.6Z" fill="#fff"/><circle cy="-0.9" r="2.1" fill="#f0651a"/></g>
<g transform="translate(585.7 256.4)"><circle r="7.7" fill="#f0651a"/><path d="M0 5.6C-1.8 3.2 -4.3 1.5 -4.3 -0.9A4.3 4.3 0 1 1 4.3 -0.9C4.3 1.5 1.8 3.2 0 5.6Z" fill="#fff"/><circle cy="-0.9" r="2.1" fill="#f0651a"/></g>
<g transform="translate(552.5 277.2)"><circle r="7.7" fill="#f0651a"/><path d="M0 5.6C-1.8 3.2 -4.3 1.5 -4.3 -0.9A4.3 4.3 0 1 1 4.3 -0.9C4.3 1.5 1.8 3.2 0 5.6Z" fill="#fff"/><circle cy="-0.9" r="2.1" fill="#f0651a"/></g>
</svg>
<style>.ml{font-family:"Noto Sans CJK KR","Liberation Sans",sans-serif;font-size:10.6px;font-weight:700}</style>
<div class="t ml" style="left:683.4px;top:184.6px;transform:translateY(-50%);color:#fff;letter-spacing:-0.825px;">동백섬</div>
<div class="t ml" style="left:580.2px;top:197.8px;transform:translateY(-50%);color:#2b4769;letter-spacing:-0.767px;">광안대교</div>
<div class="t ml" style="left:528.8px;top:210.5px;transform:translateY(-50%);color:#2b4769;letter-spacing:-1.900px;">부산</div>
<div class="t ml" style="left:479.6px;top:223.8px;transform:translateY(-50%);color:#2b4769;letter-spacing:-0.239px;">국제여객터미널</div>
<div class="t ml" style="left:640.4px;top:242.8px;transform:translateY(-50%);color:#fff;letter-spacing:-0.425px;">오륙도</div>
<div class="t ml" style="left:555.2px;top:257.3px;transform:translateY(-50%);color:#2b4769;letter-spacing:-0.800px;">조도</div>
<div class="t ml" style="left:538.8px;top:294.7px;transform:translateY(-50%);color:#fff;letter-spacing:-0.525px;">태종대</div>
<div class="t" style="left:64px;top:56.5px;font-size:13.4px;color:#fff;letter-spacing:-0.27px">PANSTAR MIRACLE</div>
<div class="hl" style="left:65px;top:78px;width:676px;background:#9a9da8"></div>
<div class="t kr" style="left:64px;top:115px;font-size:29px;font-weight:700;color:#fff;letter-spacing:-0.95px">부산 원나잇 크루즈</div>
<div class="kr abs" id="para" style="left:65px;top:168px;width:268px;font-size:13.5px;line-height:22.7px;color:#fff;font-weight:500;letter-spacing:-0.5px;text-align:justify">
<div style="text-align-last:justify">부산의 밤하늘을 화려하게 수놓는 환상적인</div>
<div style="text-align-last:justify">불꽃쇼와 함께, 한국의 대표 해양도시 부산의</div>
<div style="white-space:nowrap;letter-spacing:-0.75px">아름다운 바다를 크루즈 위에서 만끽해보세요.</div>
<div style="text-align-last:justify">미라클 호는 부산의 활기찬 매력을 경험할 수 있는</div>
<div style="text-align-last:justify">완벽한 여정을 제공합니다. 잊지 못할 바다 위의</div>
<div style="white-space:nowrap;letter-spacing:-0.75px">낭만을 경험해보세요.</div>
</div>
<style>
.ph{color:#4f86d6;font-size:11.6px;font-weight:400;font-family:"Noto Sans CJK KR","Liberation Sans",sans-serif}
.pt{color:#4a82d4;font-size:20.4px;font-weight:500;font-family:"Noto Sans CJK KR","Liberation Sans",sans-serif}
.pb{color:#666;font-size:14px;font-weight:300;font-family:"Liberation Sans","Noto Sans CJK KR",sans-serif}
.pb2{color:#666;font-size:12.4px;font-weight:300;font-family:"Liberation Sans","Noto Sans CJK KR",sans-serif}
.bl{position:absolute;background:#a9c0e8;height:1.3px}
</style>
<div class="abs" id="panel" style="left:65px;top:746px;width:676px;height:319.5px;background:rgba(245,245,248,0.972)"></div>
<div class="abs" style="left:92px;top:812.5px;width:617px;height:25.5px;background:#fff"></div>
<div class="abs" style="left:92px;top:972.5px;width:617px;height:25.7px;background:#fff"></div>
<div class="bl" style="left:92px;top:811.75px;width:617px"></div>
<div class="bl" style="left:92px;top:837.25px;width:617px"></div>
<div class="bl" style="left:92px;top:873.85px;width:271.8px"></div>
<div class="bl" style="left:92px;top:910.75px;width:617px"></div>
<div class="bl" style="left:92px;top:971.75px;width:617px"></div>
<div class="bl" style="left:92px;top:997.55px;width:617px"></div>
<div class="bl" style="left:92px;top:1034.95px;width:617px"></div>
<div class="t pt" style="left:311.3px;top:786.0px;transform:translateY(-50%);;letter-spacing:2.020px;">부산항원나잇크루즈</div>
<div class="t pt" style="left:297.6px;top:947.0px;transform:translateY(-50%);;letter-spacing:1.801px;">대한해협원나잇크루즈</div>
<div class="t ph" style="left:160.8px;top:824.4px;transform:translateY(-50%);;letter-spacing:-0.344px;">출항</div>
<div class="t ph" style="left:290.4px;top:824.4px;transform:translateY(-50%);;letter-spacing:0.109px;">탑승수속</div>
<div class="t ph" style="left:417.7px;top:824.4px;transform:translateY(-50%);;letter-spacing:0.109px;">선상뷔페</div>
<div class="t ph" style="left:527.5px;top:824.4px;transform:translateY(-50%);;letter-spacing:0.176px;">불꽃놀이</div>
<div class="t ph" style="left:643.2px;top:824.4px;transform:translateY(-50%);;letter-spacing:-0.744px;">하선</div>
<div class="t pb" style="left:109.7px;top:856.8px;transform:translateY(-50%);;letter-spacing:0.276px;">3~10월토요일17:00</div>
<div class="t pb" style="left:109.7px;top:892.8px;transform:translateY(-50%);;letter-spacing:1.211px;">11~2월토요일16:30</div>
<div class="t pb" style="left:275.5px;top:853.6px;transform:translateY(-50%);;letter-spacing:0.202px;">하절기15:30</div>
<div class="t pb" style="left:275.5px;top:889.4px;transform:translateY(-50%);;letter-spacing:0.259px;">동절기15:00</div>
<div class="t pb" style="left:395.6px;top:873px;transform:translateY(-50%);;letter-spacing:0.775px;">18:00~20:00</div>
<div class="t pb" style="left:530.7px;top:873px;transform:translateY(-50%);;letter-spacing:0.863px;">20:50</div>
<div class="t pb" style="left:614.2px;top:873px;transform:translateY(-50%);;letter-spacing:0.702px;">일요일09:00</div>
<div class="t ph" style="left:161px;top:985.4px;transform:translateY(-50%);;letter-spacing:2.031px;">출 항</div>
<div class="t ph" style="left:274.2px;top:985.4px;transform:translateY(-50%);;letter-spacing:3.409px;">발권시간</div>
<div class="t ph" style="left:372.3px;top:985.4px;transform:translateY(-50%);;letter-spacing:3.409px;">탑승수속</div>
<div class="t ph" style="left:470.4px;top:985.4px;transform:translateY(-50%);;letter-spacing:3.409px;">선상뷔페</div>
<div class="t ph" style="left:555.6px;top:985.4px;transform:translateY(-50%);;letter-spacing:3.409px;">불꽃놀이</div>
<div class="t ph" style="left:649.3px;top:985.4px;transform:translateY(-50%);;letter-spacing:-0.644px;">하선</div>
<div class="t pb2" style="left:112.5px;top:1017.5px;transform:translateY(-50%);;letter-spacing:-1.025px;">매월셋째주토요일16:30</div>
<div class="t pb2" style="left:264.5px;top:1017.5px;transform:translateY(-50%);;letter-spacing:-0.713px;">14:0&nbsp;&nbsp; ~ 15:0</div>
<div class="t pb2" style="left:362.7px;top:1017.5px;transform:translateY(-50%);;letter-spacing:-0.850px;">15:30 ~ 16:0</div>
<div class="t pb2" style="left:459.3px;top:1017.5px;transform:translateY(-50%);;letter-spacing:-0.412px;">18:00 ~ 20:00</div>
<div class="t pb2" style="left:564.6px;top:1017.5px;transform:translateY(-50%);;letter-spacing:0.121px;">20:50</div>
<div class="t pb2" style="left:629.2px;top:1017.5px;transform:translateY(-50%);;letter-spacing:-0.574px;">일요일09:00</div>
</div>
<div id="right"></div>
<div id="side"><div class="abs" style="left:20.8px;top:203px;width:15.2px;height:9.6px;background:#fff;border-radius:1.2px"></div></div>
<style>
.m{position:absolute;transform:translate(-50%,-50%);white-space:nowrap;line-height:1}
.fh{color:#fff;font-weight:700;font-size:12px;letter-spacing:-0.9px;font-family:"Noto Sans CJK KR","Liberation Sans",sans-serif}
.fd{color:#606060;font-size:12.1px;letter-spacing:0.75px}
.fn{color:#555;font-size:12.3px;letter-spacing:0.35px}
.fg{color:#555;font-size:11.5px;letter-spacing:-0.8px;font-family:"Noto Sans CJK KR","Liberation Sans",sans-serif;font-weight:300}
.gl{position:absolute;background:#a6a6a6}
</style>
<div class="hl" style="left:859px;top:78px;width:616px;background:#6f9adb"></div>
<div class="t kr" style="left:858px;top:105px;font-size:17.6px;color:#4f86d6;letter-spacing:0.65px">판매운임</div>
<div class="t kr" style="left:859px;top:145px;font-size:14.2px;color:#4f86d6;letter-spacing:2.2px">-원나잇크루즈</div>
<div class="abs" style="left:855px;top:173px;width:625px;height:39px;background:#5087da"></div>
<div class="abs" style="left:1018px;top:173px;width:1.6px;height:39px;background:#a4c0ec"></div>
<div class="abs" style="left:1106px;top:173px;width:1.6px;height:39px;background:#a4c0ec"></div>
<div class="abs" style="left:1185px;top:173px;width:1.6px;height:39px;background:#a4c0ec"></div>
<div class="abs" style="left:1343px;top:173px;width:1.6px;height:39px;background:#a4c0ec"></div>
<div class="abs" style="left:1265.5px;top:193px;width:1.5px;height:19px;background:#9cbcea"></div>
<div class="abs" style="left:1187px;top:192.5px;width:156px;height:1.5px;background:#9cbcea"></div>
<div class="m fh" style="left:939px;top:191.2px;">객실등급</div>
<div class="m fh" style="left:1062px;top:190.3px;">객실수</div>
<div class="m fh" style="left:1146.3px;top:190.3px;">정원</div>
<div class="m fh" style="left:1264.8px;top:181.8px;">1인당요금</div>
<div class="m fh" style="left:1225.3px;top:201.8px;">부산항</div>
<div class="m fh" style="left:1304.3px;top:201.8px;">대한해협</div>
<div class="m fh" style="left:1413.6px;top:190.3px;letter-spacing:-0.2px">정원미달추가요금(1인)</div>
<div class="gl" style="left:910px;top:266.05px;width:570px;height:1.5px"></div>
<div class="gl" style="left:910px;top:316.75px;width:570px;height:1.5px"></div>
<div class="gl" style="left:855px;top:367.85px;width:625px;height:1.5px"></div>
<div class="gl" style="left:910px;top:418.65px;width:570px;height:1.5px"></div>
<div class="gl" style="left:910px;top:469.75px;width:570px;height:1.5px"></div>
<div class="gl" style="left:910px;top:520.45px;width:570px;height:1.5px"></div>
<div class="gl" style="left:855px;top:571.65px;width:625px;height:1.5px"></div>
<div class="gl" style="left:909px;top:212px;width:1.6px;height:361px"></div>
<div class="m fn" style="left:968.285px;top:239.8px;letter-spacing:0.57px">FamilyCabin</div>
<div class="m fd" style="left:1064.1px;top:242.2px;">4</div>
<div class="m fd" style="left:1156.8px;top:242.2px;">8</div>
<div class="m fd" style="left:1224.5px;top:242.2px;">160,000</div>
<div class="m fd" style="left:1303.5px;top:242.2px;">180,000</div>
<div class="m fg" style="left:1410.2px;top:241px;">불가</div>
<div class="m fn" style="left:967.26px;top:289.8px;letter-spacing:0.52px">InsideCabin</div>
<div class="m fd" style="left:1066.2px;top:290.7px;">3 0</div>
<div class="m fd" style="left:1156.8px;top:290.7px;">4</div>
<div class="m fd" style="left:1224.5px;top:290.7px;">200,000</div>
<div class="m fd" style="left:1303.5px;top:290.7px;">220,000</div>
<div class="m fd" style="left:1410.7px;top:290.7px;">100,000</div>
<div class="m fn" style="left:970.45px;top:340.8px;letter-spacing:1.5px">OceanView</div>
<div class="m fd" style="left:1066.2px;top:341.5px;">3 0</div>
<div class="m fd" style="left:1156.8px;top:341.5px;">4</div>
<div class="m fd" style="left:1224.5px;top:341.5px;">250,000</div>
<div class="m fd" style="left:1303.5px;top:341.5px;">270,000</div>
<div class="m fd" style="left:1410.7px;top:341.5px;">150,000</div>
<div class="m fn" style="left:968.675px;top:391.8px;letter-spacing:1.35px">Balcony</div>
<div class="m fd" style="left:1066.2px;top:392.09999999999997px;">3 0</div>
<div class="m fd" style="left:1156.8px;top:392.09999999999997px;">2</div>
<div class="m fd" style="left:1224.5px;top:392.09999999999997px;">400,000</div>
<div class="m fd" style="left:1303.5px;top:392.09999999999997px;">450,000</div>
<div class="m fd" style="left:1410.7px;top:392.09999999999997px;">200,000</div>
<div class="m fn" style="left:964.725px;top:443.8px;letter-spacing:0.05px">Royal</div>
<div class="m fd" style="left:1064.1px;top:444.0px;">5</div>
<div class="m fd" style="left:1156.8px;top:444.0px;">3</div>
<div class="m fd" style="left:1224.5px;top:444.0px;">600,000</div>
<div class="m fd" style="left:1303.5px;top:444.0px;">650,000</div>
<div class="m fd" style="left:1410.7px;top:444.0px;">300,000</div>
<div class="m fn" style="left:967.05px;top:496.8px;letter-spacing:0.5px">Presidential</div>
<div class="m fd" style="left:1064.1px;top:495.3px;">1</div>
<div class="m fd" style="left:1156.8px;top:495.3px;">2</div>
<div class="m fd" style="left:1224.5px;top:495.3px;">900,000</div>
<div class="m fd" style="left:1303.5px;top:495.3px;">950,000</div>
<div class="m fd" style="left:1410.7px;top:495.3px;">500,000</div>
<div class="m fn" style="left:965.25px;top:545.3px;letter-spacing:0.5px">Owner's</div>
<div class="m fd" style="left:1064.1px;top:547.2px;">1</div>
<div class="m fd" style="left:1156.8px;top:547.2px;">2</div>
<div class="m fd" style="left:1224.5px;top:547.2px;">1,200,000</div>
<div class="m fd" style="left:1303.5px;top:547.2px;">1,300,000</div>
<div class="m fd" style="left:1410.7px;top:547.2px;">800,000</div>
<div class="m fg" style="left:882px;top:294.2px;">일반</div>
<div class="m fg" style="left:882px;top:474.7px;">스위트</div>
<style>
.ik{display:inline-block;vertical-align:middle;position:relative;top:-0.5px}
.ib{color:#5c5c5c;font-size:10.2px;font-weight:300;font-family:"Noto Sans CJK KR","Liberation Sans",sans-serif}
.il{color:#3a3a3a;font-size:10.3px;font-weight:300;font-family:"Noto Sans CJK KR","Liberation Sans",sans-serif}
.bn{font-family:"Liberation Sans",sans-serif;font-size:16.4px;color:#5e5e5e;font-weight:400}
.sn{font-family:"Liberation Sans",sans-serif}
.ch{color:#fff;font-size:10.6px;font-weight:400;font-family:"Noto Sans CJK KR","Liberation Sans",sans-serif}
.cb{color:#6a6a6a;font-size:10.6px;font-weight:300;font-family:"Noto Sans CJK KR","Liberation Sans",sans-serif}
</style>
<div class="abs" style="left:855px;top:607.4px;width:616px;height:20.4px;background:#b1b2b3"></div>
<div class="gl" style="left:855px;top:679.80px;width:616px;height:1.4px"></div>
<div class="gl" style="left:855px;top:731.60px;width:616px;height:1.4px"></div>
<div class="gl" style="left:855px;top:871.90px;width:616px;height:1.4px"></div>
<div class="gl" style="left:855px;top:935.90px;width:616px;height:1.4px"></div>
<div class="abs" style="left:859px;top:1011px;width:616px;height:21.2px;background:#b1b2b3"></div>
<div class="gl" style="left:859px;top:1060.1px;width:616px;height:1.4px"></div>
<div class="t ch" style="left:891.55px;top:617.9px;transform:translateY(-50%);;letter-spacing:0.000px;">구분</div>
<div class="t ch" style="left:1203.75px;top:617.9px;transform:translateY(-50%);;letter-spacing:0.000px;">내용</div>
<div class="t il" style="left:891.5px;top:654.2px;transform:translateY(-50%);;letter-spacing:0.047px;">일정</div>
<div class="t il" style="left:881.55px;top:706.2px;transform:translateY(-50%);;letter-spacing:0.531px;">적용조건</div>
<div class="t il" style="left:881.75px;top:805.4px;transform:translateY(-50%);;letter-spacing:0.531px;">공통사항</div>
<div class="t il" style="left:880.0px;top:904.8px;transform:translateY(-50%);;letter-spacing:1.365px;">예약방법</div>
<div class="t ib" style="left:953.5px;top:642.8px;transform:translateY(-50%);;letter-spacing:0.527px;"><span class="sn">1.</span> 부산항원나잇크루즈(매월1,2,4,5주차주말운항)</div>
<div class="t ib" style="left:953.5px;top:660.1px;transform:translateY(-50%);;letter-spacing:1.437px;"><span class="sn">2.</span>대한해협원나잇크루즈(매월3주차주말운항)</div>
<div class="t ib" style="left:953.5px;top:694.8px;transform:translateY(-50%);;letter-spacing:0.485px;"><span class="sn">1.</span> 첨부요금표는1박 2일 요 금 적 용 (객실료, 뷔페2식, 공연프로그램등)</div>
<div class="t ib" style="left:953.5px;top:712.4px;transform:translateY(-50%);;letter-spacing:1.511px;"><span class="sn">2.</span>단독행사및인센티브행사는별도문의(자체일정포함)</div>
<div class="t ib" style="left:953.5px;top:750.5px;transform:translateY(-50%);;letter-spacing:1.701px;"><span class="bn">1.</span>터미널<svg class="ik" width="12.4" height="12.4" viewBox="0 0 12 12" style="margin:0 0.4px"><circle cx="6" cy="6" r="5.2" fill="none" stroke="#555" stroke-width="1.05"/><path d="M6 2.9V6.2L7.9 7.5" stroke="#555" stroke-width="1" fill="none"/></svg>용료(별도)</div>
<div class="t ib" style="left:953.5px;top:769.7px;transform:translateY(-50%);;letter-spacing:0.928px;">-부산항(5,880원),대한해협(7,000원)</div>
<div class="t ib" style="left:953.5px;top:783.8px;transform:translateY(-50%);;letter-spacing:1.504px;"><span class="bn">2.</span>단독행사및인센티브행사는별도문의(자체일정포함)</div>
<div class="t ib" style="left:953.5px;top:800.8px;transform:translateY(-50%);;letter-spacing:0.673px;"><span class="bn">3 . </span> <svg class="ik" width="12.4" height="12.4" viewBox="0 0 12 12" style="margin:0 0.4px"><circle cx="6" cy="6" r="5.2" fill="none" stroke="#555" stroke-width="1.05"/><path d="M6 2.9V6.2L7.9 7.5" stroke="#555" stroke-width="1" fill="none"/></svg> 벤트및프로모션에따른요금할인정책은홈페<svg class="ik" width="12.4" height="12.4" viewBox="0 0 12 12" style="margin:0 0.4px"><circle cx="6" cy="6" r="5.2" fill="none" stroke="#555" stroke-width="1.05"/><path d="M6 2.9V6.2L7.9 7.5" stroke="#555" stroke-width="1" fill="none"/></svg> 지를참고해주시고연락바랍니다</div>
<div class="t ib" style="left:966px;top:816px;transform:translateY(-50%);;">.</div>
<div class="t ib" style="left:953.5px;top:830.3px;transform:translateY(-50%);;letter-spacing:1.693px;"><span class="bn">4.</span>일반객실은단독사용불가</div>
<div class="t ib" style="left:953.5px;top:846.5px;transform:translateY(-50%);;letter-spacing:0.681px;"><span class="bn">5.</span>유아(2세미만)는선비무료</div>
<div class="t ib" style="left:953.5px;top:862.7px;transform:translateY(-50%);;letter-spacing:1.410px;"><span class="bn">6.</span>선임은중복할인허용X,단연령할인은허용함.</div>
<div class="t ib" style="left:953.5px;top:886.9px;transform:translateY(-50%);;letter-spacing:0.730px;"><span class="bn">1.</span>FIT예약(15인<svg class="ik" width="12.4" height="12.4" viewBox="0 0 12 12" style="margin:0 0.4px"><circle cx="6" cy="6" r="5.2" fill="none" stroke="#555" stroke-width="1.05"/><path d="M6 2.9V6.2L7.9 7.5" stroke="#555" stroke-width="1" fill="none"/></svg>하)은홈페<svg class="ik" width="12.4" height="12.4" viewBox="0 0 12 12" style="margin:0 0.4px"><circle cx="6" cy="6" r="5.2" fill="none" stroke="#555" stroke-width="1.05"/><path d="M6 2.9V6.2L7.9 7.5" stroke="#555" stroke-width="1" fill="none"/></svg>지에서실시간객실수량확인&gt;&nbsp; 예약자명(여행사명),연락처(예약담당자번호)기재&gt;</div>
<div class="t ib" style="left:952.2px;top:901.9px;transform:translateY(-50%);;letter-spacing:0.706px;">무통장입금으로체크&gt; 실시간온라인예약해주시고아래의<svg class="ik" width="12.4" height="12.4" viewBox="0 0 12 12" style="margin:0 0.4px"><circle cx="6" cy="6" r="5.2" fill="none" stroke="#555" stroke-width="1.05"/><path d="M6 2.9V6.2L7.9 7.5" stroke="#555" stroke-width="1" fill="none"/></svg>메일주소로명단을보내주시기바랍니다.(입금시정산반영</div>
<div class="t ib" style="left:953px;top:915.6px;transform:translateY(-50%);;">)</div>
<div class="t ib" style="left:953.5px;top:929.6px;transform:translateY(-50%);;letter-spacing:0.636px;"><span class="bn">2.</span>PKG및단체예약(15인<svg class="ik" width="12.4" height="12.4" viewBox="0 0 12 12" style="margin:0 0.4px"><circle cx="6" cy="6" r="5.2" fill="none" stroke="#555" stroke-width="1.05"/><path d="M6 2.9V6.2L7.9 7.5" stroke="#555" stroke-width="1" fill="none"/></svg>상)은첨부해드린신청서와명단을기재하시어<svg class="ik" width="12.4" height="12.4" viewBox="0 0 12 12" style="margin:0 0.4px"><circle cx="6" cy="6" r="5.2" fill="none" stroke="#555" stroke-width="1.05"/><path d="M6 2.9V6.2L7.9 7.5" stroke="#555" stroke-width="1" fill="none"/></svg>메일(cruise@panstar.kr)로접수드립니</div>
<div class="t ib" style="left:964.7px;top:945.1px;transform:translateY(-50%);;letter-spacing:0.378px;">다.</div>
<div class="t kr" style="left:858.7px;top:988.2px;transform:translateY(-50%);font-size:17px;color:#858585;font-weight:400;letter-spacing:0.137px;">취소료 규정</div>
<div class="t ch" style="left:887.8px;top:1022.6px;transform:translateY(-50%);;letter-spacing:0.248px;">30~15일 이전</div>
<div class="t ch" style="left:1017.85px;top:1022.6px;transform:translateY(-50%);;letter-spacing:-0.138px;">14~10일 전</div>
<div class="t ch" style="left:1145.7px;top:1022.6px;transform:translateY(-50%);;letter-spacing:0.497px;">9~7일 전</div>
<div class="t ch" style="left:1268.7px;top:1022.6px;transform:translateY(-50%);;letter-spacing:0.497px;">6~2일 전</div>
<div class="t ch" style="left:1386.7px;top:1022.6px;transform:translateY(-50%);;letter-spacing:-0.201px;">1일 전(당일)</div>
<div class="t cb" style="left:883.25px;top:1047.7px;transform:translateY(-50%);;letter-spacing:0.004px;">요금의 10% 부과</div>
<div class="t cb" style="left:1004.75px;top:1047.7px;transform:translateY(-50%);;letter-spacing:0.293px;">요금의 20% 부과</div>
<div class="t cb" style="left:1127.6499999999999px;top:1047.7px;transform:translateY(-50%);;letter-spacing:0.337px;">요금의 30% 부과</div>
<div class="t cb" style="left:1251.05px;top:1047.7px;transform:translateY(-50%);;letter-spacing:0.337px;">요금의 50% 부과</div>
<div class="t cb" style="left:1372.7px;top:1047.7px;transform:translateY(-50%);;letter-spacing:0.108px;">요금의 100% 부과</div>
</body>
</html>
